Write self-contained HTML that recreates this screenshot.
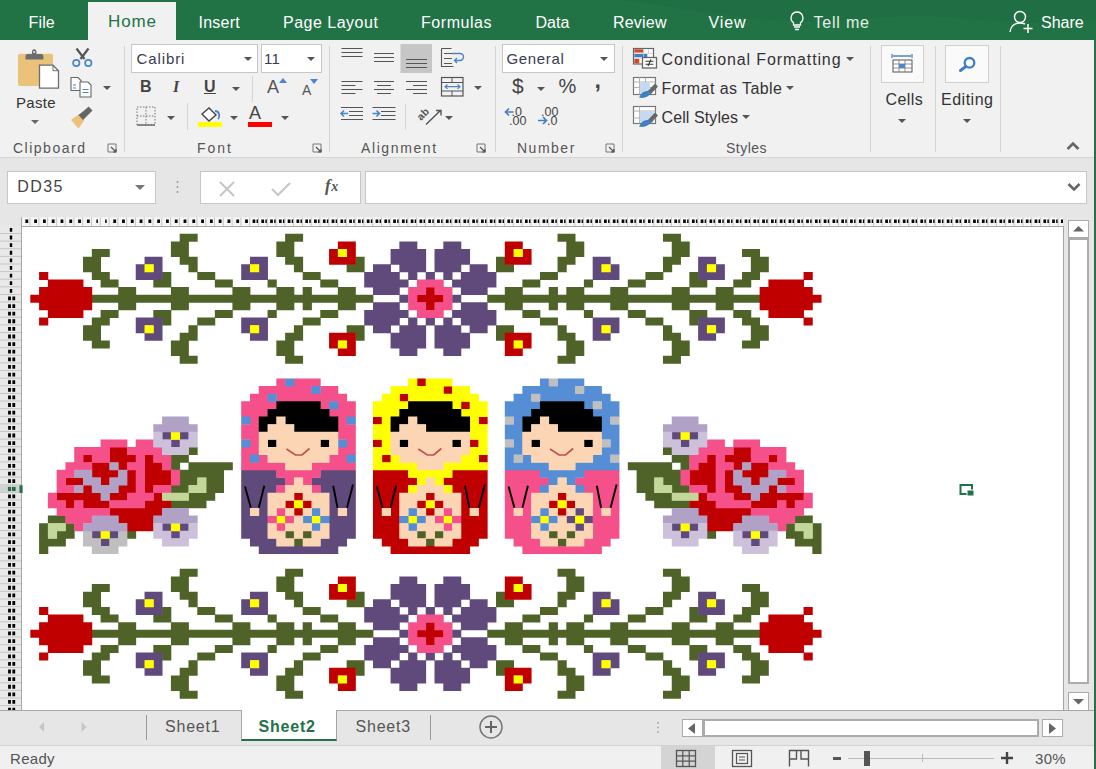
<!DOCTYPE html>
<html><head><meta charset="utf-8">
<style>
*{margin:0;padding:0;box-sizing:border-box}
html,body{width:1096px;height:769px;overflow:hidden;background:#e6e6e6;font-family:"Liberation Sans",sans-serif;color:#444}
.a{position:absolute}
#tabs{left:0;top:0;width:1096px;height:40px;background:#217346}
.tab{position:absolute;top:13.5px;font-size:16px;letter-spacing:.45px;color:#fff;line-height:18px;white-space:nowrap}
#home{left:88px;top:2px;width:88px;height:39px;background:#f1f1f1}
#ribbon{left:0;top:40px;width:1094px;height:118px;background:#f1f1f1;border-bottom:1px solid #d5d5d5}
.vsep{position:absolute;width:1px;background:#d4d4d4}
.glabel{position:absolute;top:139.5px;font-size:14px;letter-spacing:.4px;color:#555;line-height:16px;white-space:nowrap}
.rt{position:absolute;font-size:16px;letter-spacing:.3px;color:#333;line-height:18px;white-space:nowrap}
.box{position:absolute;background:#fff;border:1px solid #c6c6c6}
.dd{position:absolute;width:0;height:0;border-left:4px solid transparent;border-right:4px solid transparent;border-top:4px solid #555}
.ch{position:absolute;top:217.5px;width:8.787px;height:9px;border-right:1px solid #c9c9c9;background:#f7f7f7;font-size:6px;font-weight:bold;color:#000;text-align:center;line-height:9px;overflow:hidden;letter-spacing:-.5px}
.rh{position:absolute;left:0;width:21.7px;height:7.614px;border-bottom:1px solid #c9c9c9;background:#f0f0f0;font-size:6px;font-weight:bold;color:#000;text-align:center;line-height:7px;overflow:hidden}
</style></head><body>
<!-- tab bar -->
<div id="tabs" class="a">
  <svg class="a" style="left:0;top:0" width="1096" height="40"><path d="M620 0 C700 8 760 30 880 18 C950 10 1000 30 1096 20 L1096 0 Z" fill="#1f6c42" opacity=".6"/></svg>
</div>
<div id="home" class="a"></div>
<div class="tab" style="left:28.5px;letter-spacing:.15px">File</div>
<div class="tab" style="left:108px;top:12.5px;font-size:17px;color:#217346;letter-spacing:.85px">Home</div>
<div class="tab" style="left:198.5px;letter-spacing:.25px">Insert</div>
<div class="tab" style="left:283px;letter-spacing:.5px">Page Layout</div>
<div class="tab" style="left:421px;letter-spacing:.55px">Formulas</div>
<div class="tab" style="left:535.5px;letter-spacing:0">Data</div>
<div class="tab" style="left:613px;letter-spacing:.2px">Review</div>
<div class="tab" style="left:708.5px;letter-spacing:.85px">View</div>
<svg class="a" style="left:788px;top:10px" width="18" height="22"><path d="M9 2 a6 6 0 0 0 -3.5 10.8 V15 h7 v-2.2 A6 6 0 0 0 9 2z M6 17 h6 M7 19.5 h4" fill="none" stroke="#fff" stroke-width="1.3"/></svg>
<div class="tab" style="left:813.5px;letter-spacing:.8px;color:#e6eee9">Tell me</div>
<svg class="a" style="left:1008px;top:8px" width="26" height="26"><circle cx="12" cy="9" r="5.5" fill="none" stroke="#fff" stroke-width="1.4"/><path d="M2 24 C3 17 8 15 12 15 C14 15 16 15.5 17 16" fill="none" stroke="#fff" stroke-width="1.4"/><path d="M20 16 v9 M15.5 20.5 h9" stroke="#fff" stroke-width="1.5"/></svg>
<div class="tab" style="left:1041px;letter-spacing:0">Share</div>

<!-- ribbon -->
<div id="ribbon" class="a"></div>
<div class="a" style="left:1094px;top:40px;width:2px;height:729px;background:#217346"></div>

<!-- clipboard group -->
<svg class="a" style="left:0;top:40px" width="125" height="100">
  <rect x="18" y="13.7" width="35" height="32.3" rx="2" fill="#eac27a"/>
  <path d="M25.5 19.5 v-3.5 q0-2 2-2 h4.5 v-2.5 a2.2 2.2 0 0 1 4.4 0 v2.5 h5 q2 0 2 2 v3.5z" fill="#6d6d6d"/>
  <circle cx="34.2" cy="12" r="1" fill="#eee"/>
  <path d="M39.5 25.2 h13.5 l5.5 5.5 v17.4 h-19z" fill="#fff" stroke="#6d6d6d" stroke-width="1.3"/>
  <path d="M53 25.2 v5.5 h5.5" fill="none" stroke="#6d6d6d" stroke-width="1"/>
  <path d="M76.5 8.5 L84.5 19 M88.5 8.5 L80.5 19" stroke="#555" stroke-width="2.2"/>
  <circle cx="76.3" cy="23" r="3.2" fill="none" stroke="#4a86c8" stroke-width="1.7"/>
  <circle cx="88.3" cy="23" r="3.2" fill="none" stroke="#4a86c8" stroke-width="1.7"/>
  <path d="M71 37.5 h7 l3 3 v10 h-10z" fill="#fff" stroke="#666" stroke-width="1.1"/>
  <path d="M73 45 h3 M73 48 h3" stroke="#4a86c8" stroke-width="1"/>
  <path d="M80 42 h8 l3 3 v12 h-11z" fill="#fff" stroke="#666" stroke-width="1.1"/>
  <path d="M82.5 49.5 h6 M82.5 52.5 h6" stroke="#4a86c8" stroke-width="1"/>
  <path d="M71 80 L79 74 L84.5 80 L78.5 88.5 Z" fill="#eac27a"/>
  <path d="M78.5 75 L86 69 L90 73 L83 80 Z" fill="#666"/>
  <path d="M85.5 69.5 L88.5 66.5 L92.5 70.5 L89.5 73.5 Z" fill="#666"/>
</svg>
<div class="rt" style="left:16px;top:94px;font-size:15px">Paste</div>
<div class="dd" style="left:31px;top:120px;border-top-color:#666"></div>


<div class="dd" style="left:103px;top:86px"></div>

<div class="vsep" style="left:124px;top:46px;height:106px"></div>
<div class="glabel" style="left:13px;letter-spacing:1.5px">Clipboard</div>
<svg class="a" style="left:107px;top:143px" width="11" height="10"><path d="M1 1 h8 v8 h-8 z" fill="none" stroke="#777" stroke-width="1"/><path d="M4 4 L9 9 M9 6 v3 h-3" stroke="#555" stroke-width="1.2" fill="none"/></svg>

<!-- font group -->
<div class="box" style="left:131px;top:44px;width:127px;height:29px"></div>
<div class="rt" style="left:136.5px;top:50px;font-size:15px;color:#3a3a50;letter-spacing:.9px">Calibri</div>
<div class="dd" style="left:244px;top:57px"></div>
<div class="box" style="left:260.5px;top:44px;width:61.5px;height:29px"></div>
<div class="rt" style="left:264px;top:50px;font-size:15px;color:#3a3a50">11</div>
<div class="dd" style="left:307px;top:57px"></div>
<div class="rt" style="left:140px;top:78px;font-size:16px;font-weight:bold;color:#444">B</div>
<div class="rt" style="left:173px;top:78px;font-size:16px;font-style:italic;font-family:'Liberation Serif';font-weight:bold;color:#444">I</div>
<div class="rt" style="left:204px;top:78px;font-size:16px;font-weight:bold;color:#444;text-decoration:underline">U</div>
<div class="dd" style="left:232px;top:87px"></div>
<div class="vsep" style="left:252px;top:76px;height:26px"></div>
<div class="rt" style="left:267px;top:78px;font-size:18px;color:#555">A</div>
<svg class="a" style="left:279px;top:78px" width="8" height="5"><path d="M0 5 L4 0 L8 5Z" fill="#4a86c8"/></svg>
<div class="rt" style="left:302px;top:81px;font-size:14px;color:#555">A</div>
<svg class="a" style="left:310px;top:79px" width="8" height="5"><path d="M0 0 L4 5 L8 0Z" fill="#4a86c8"/></svg>
<svg class="a" style="left:136px;top:106px" width="22" height="20"><path d="M1 1 h18 v18 h-18z M10 1 v18 M1 10 h18" fill="none" stroke="#777" stroke-width="1" stroke-dasharray="1.5 1.5"/><path d="M1 19 h18" stroke="#555" stroke-width="1.2"/></svg>
<div class="dd" style="left:167px;top:116px"></div>
<div class="vsep" style="left:187px;top:103px;height:27px"></div>
<svg class="a" style="left:197px;top:105px" width="28" height="24"><path d="M5 9 L12 3 L19 10 L12 16 Z" fill="#fff" stroke="#444" stroke-width="1.4"/><path d="M18 6 C23 6 23 12 21 14" fill="none" stroke="#4a86c8" stroke-width="1.8"/><rect x="1" y="17" width="24" height="5" fill="#ffff00"/></svg>
<div class="dd" style="left:230px;top:116px"></div>
<div class="rt" style="left:249px;top:104px;font-size:18px;color:#444">A</div>
<div class="a" style="left:248px;top:122px;width:24px;height:5px;background:#ff0000"></div>
<div class="dd" style="left:281px;top:116px"></div>
<div class="vsep" style="left:329px;top:46px;height:106px"></div>
<div class="glabel" style="left:197px;letter-spacing:2px">Font</div>
<svg class="a" style="left:312px;top:143px" width="11" height="10"><path d="M1 1 h8 v8 h-8 z" fill="none" stroke="#777" stroke-width="1"/><path d="M4 4 L9 9 M9 6 v3 h-3" stroke="#555" stroke-width="1.2" fill="none"/></svg>

<!-- alignment group -->
<svg class="a" style="left:0;top:0" width="1096" height="160">
  <g stroke="#555" stroke-width="1.1" fill="none">
   <path d="M341.5 48.5h21M341.5 52.5h21M341.5 56.5h21"/>
   <path d="M374 53.5h20M374 57.5h20M374 61.5h20"/>
  </g>
  <rect x="400.5" y="44" width="31.5" height="29" fill="#c6c6c6"/>
  <path d="M406 59.5h21M406 63.5h21M406 67.5h21" stroke="#555" stroke-width="1.1"/>
  <g fill="none" stroke="#555" stroke-width="1.1">
   <path d="M441.5 48.5v18h12M441.5 48.5h10M444 53.5h17M444 58.5h8M444 63.5h8"/>
  </g>
  <path d="M452 53.5h8a3.5 3.5 0 0 1 0 7h-5M457 58l-2.5 2.5l2.5 2.5" fill="none" stroke="#4a86c8" stroke-width="1.4"/>
  <g stroke="#555" stroke-width="1.1">
   <path d="M341.5 81.5h21M341.5 85.5h14M341.5 89.5h21M341.5 93.5h14"/>
   <path d="M374 81.5h20M377 85.5h14M374 89.5h20M377 93.5h14"/>
   <path d="M406 81.5h21M413 85.5h14M406 89.5h21M413 93.5h14"/>
  </g>
  <rect x="441.5" y="77.5" width="21.5" height="18.5" fill="none" stroke="#555" stroke-width="1.2"/>
  <path d="M441.5 82.5h21.5M441.5 91h21.5M452 77.5v5M452 91v5" stroke="#555" stroke-width="1"/>
  <path d="M445 86.7h15M447.5 84.5l-2.5 2.2l2.5 2.2M457.5 84.5l2.5 2.2l-2.5 2.2" fill="none" stroke="#4a86c8" stroke-width="1.2"/>
  <g stroke="#555" stroke-width="1.1">
   <path d="M341 107.5h22M349 111.5h14M349 115.5h14M341 119.5h22"/>
   <path d="M372.5 107.5h23M381 111.5h14.5M381 115.5h14.5M372.5 119.5h23"/>
  </g>
  <path d="M341 113.5h7M344 110.5l-3 3l3 3" fill="none" stroke="#4a86c8" stroke-width="1.6"/>
  <path d="M372.5 113.5h7M376.5 110.5l3 3l-3 3" fill="none" stroke="#4a86c8" stroke-width="1.6"/>
  <path d="M426 124.5L441 110M436 110.5h5v5" fill="none" stroke="#555" stroke-width="1.4"/>
  <text x="0" y="0" font-size="10.5" font-weight="bold" fill="#555" font-family="Liberation Sans" transform="translate(421 121) rotate(-45)">ab</text>
</svg>
<div class="dd" style="left:474px;top:86px"></div>
<div class="dd" style="left:445px;top:116px"></div>
<div class="vsep" style="left:405px;top:104px;height:26px"></div>
<div class="vsep" style="left:495px;top:46px;height:106px"></div>
<div class="glabel" style="left:361px;letter-spacing:1.6px">Alignment</div>
<svg class="a" style="left:476px;top:143px" width="11" height="10"><path d="M1 1 h8 v8 h-8 z" fill="none" stroke="#777" stroke-width="1"/><path d="M4 4 L9 9 M9 6 v3 h-3" stroke="#555" stroke-width="1.2" fill="none"/></svg>

<!-- number group -->
<div class="box" style="left:502px;top:44px;width:113px;height:29px"></div>
<div class="rt" style="left:506.5px;top:50px;font-size:15px;color:#3a3a50;letter-spacing:.65px">General</div>
<div class="dd" style="left:600px;top:57px"></div>
<div class="rt" style="left:512px;top:76.5px;font-size:21px;color:#444">$</div>
<div class="dd" style="left:537px;top:87px"></div>
<div class="rt" style="left:558.5px;top:77px;font-size:20px;color:#444">%</div>
<div class="rt" style="left:594.5px;top:71px;font-size:23px;font-weight:bold;color:#444">,</div>
<svg class="a" style="left:504px;top:105px" width="70" height="24">
 <text x="7.5" y="11" font-size="12.5" fill="#444" font-family="Liberation Sans">.0</text>
 <text x="5" y="20" font-size="12.5" fill="#444" font-family="Liberation Sans">.00</text>
 <path d="M1.5 7 h8 M5 3.5 l-3.5 3.5 l3.5 3.5" fill="none" stroke="#3f7fc4" stroke-width="1.7"/>
 <text x="37" y="11" font-size="12.5" fill="#444" font-family="Liberation Sans">.00</text>
 <text x="43" y="20" font-size="12.5" fill="#444" font-family="Liberation Sans">.0</text>
 <path d="M34 15.5 h8.5 M39 12 l3.5 3.5 l-3.5 3.5" fill="none" stroke="#3f7fc4" stroke-width="1.7"/>
</svg>
<div class="vsep" style="left:622px;top:46px;height:106px"></div>
<div class="glabel" style="left:517px;letter-spacing:1.5px">Number</div>
<svg class="a" style="left:605px;top:143px" width="11" height="10"><path d="M1 1 h8 v8 h-8 z" fill="none" stroke="#777" stroke-width="1"/><path d="M4 4 L9 9 M9 6 v3 h-3" stroke="#555" stroke-width="1.2" fill="none"/></svg>

<!-- styles group -->
<svg class="a" style="left:625px;top:42px" width="40" height="90">
  <rect x="8.5" y="6.5" width="20" height="15.5" fill="#fff" stroke="#666" stroke-width="1.2"/>
  <path d="M9 10h15" stroke="#e9e9e9" stroke-width="0"/>
  <rect x="9.3" y="7.3" width="9" height="3.3" fill="#d24726"/>
  <rect x="9.3" y="12" width="13" height="3.3" fill="#3f7fc4"/>
  <rect x="9.3" y="16.8" width="5" height="4.5" fill="#d24726"/>
  <path d="M18.5 7v14.5M23.5 7v5M9 11.3h19M9 16h19" stroke="#ccc" stroke-width=".8"/>
  <rect x="17.5" y="15.5" width="14" height="10.5" fill="#fff" stroke="#666" stroke-width="1.3"/>
  <path d="M20.5 19.3h8M20.5 22.3h8M26 17.5l-3 6.5" stroke="#333" stroke-width="1.1"/>
  <rect x="8.5" y="35.5" width="22" height="17" fill="#fff" stroke="#777" stroke-width="1.2"/>
  <path d="M8.5 40h22M8.5 45.5h22M14.5 35.5v17M20.5 35.5v17" stroke="#aaa" stroke-width=".9"/>
  <rect x="14.8" y="40.3" width="10" height="11.5" fill="#c5d9f1"/>
  <path d="M22 50 L30 41.5 L33 44.5 L25 53 Z" fill="#666"/>
  <path d="M14 55.5 C17 49 22 47.5 26 50.5 C25 54 19 57 14 55.5Z" fill="#3f7fc4"/>
  <rect x="8.5" y="64.5" width="22" height="17" fill="#fff" stroke="#777" stroke-width="1.2"/>
  <path d="M8.5 69h22M8.5 76h22M14.5 64.5v17" stroke="#aaa" stroke-width=".9"/>
  <rect x="14.8" y="69.3" width="14" height="11.5" fill="#c5d9f1"/>
  <path d="M22 79 L30 70.5 L33 73.5 L25 82 Z" fill="#666"/>
  <path d="M14 84.5 C17 78 22 76.5 26 79.5 C25 83 19 86 14 84.5Z" fill="#3f7fc4"/>
</svg>
<div class="rt" style="left:661.5px;top:51px;letter-spacing:.86px">Conditional Formatting</div>
<div class="dd" style="left:846px;top:57px"></div>
<div class="rt" style="left:661.5px;top:80px;letter-spacing:.43px">Format as Table</div>
<div class="dd" style="left:786px;top:86px"></div>
<div class="rt" style="left:661.5px;top:109px;letter-spacing:.1px">Cell Styles</div>
<div class="dd" style="left:742px;top:115px"></div>
<div class="vsep" style="left:870px;top:46px;height:106px"></div>
<div class="glabel" style="left:726px;letter-spacing:.5px">Styles</div>

<!-- cells / editing -->
<div class="box" style="left:880.5px;top:45px;width:43.5px;height:38px;background:#fafafa;border-color:#d0d0d0"></div>
<svg class="a" style="left:890px;top:52px" width="24" height="24"><path d="M2 2 v4 M22 2 v4 M3 4 h18" stroke="#4a86c8" stroke-width="1.3"/><rect x="3" y="8" width="19" height="12" fill="#fff" stroke="#555" stroke-width="1"/><path d="M3 12 h19 M3 16 h19 M9 8 v12 M15 8 v12" stroke="#777" stroke-width=".8"/><rect x="9" y="12" width="6" height="4" fill="#4a86c8"/></svg>
<div class="rt" style="left:885.5px;top:91px;font-size:16px;letter-spacing:.4px">Cells</div>
<div class="dd" style="left:898px;top:119px"></div>
<div class="vsep" style="left:934.8px;top:46px;height:106px"></div>
<div class="box" style="left:945px;top:45px;width:44px;height:38px;background:#fafafa;border-color:#d0d0d0"></div>
<svg class="a" style="left:956px;top:55px" width="22" height="20"><circle cx="13.5" cy="7.8" r="4.8" fill="none" stroke="#3f7fc4" stroke-width="2.3"/><path d="M9.8 11.5 L4.5 15.5" stroke="#3f7fc4" stroke-width="3" stroke-linecap="round"/></svg>
<div class="rt" style="left:941px;top:91px;font-size:16px;letter-spacing:.5px">Editing</div>
<div class="dd" style="left:963px;top:119px"></div>
<div class="vsep" style="left:1000px;top:46px;height:106px"></div>
<svg class="a" style="left:1066px;top:141px" width="14" height="10"><path d="M1.5 8 L7 2.5 L12.5 8" fill="none" stroke="#666" stroke-width="2.6"/></svg>

<!-- formula bar -->
<div class="box" style="left:7px;top:171px;width:149px;height:33px"></div>
<div class="rt" style="left:17.3px;top:178px;font-size:16px;color:#444;letter-spacing:1.4px">DD35</div>
<div class="dd" style="left:135px;top:185px;border-left-width:5px;border-right-width:5px;border-top-width:5px;border-top-color:#777"></div>
<svg class="a" style="left:175px;top:180px" width="5" height="16"><circle cx="2.5" cy="2" r="1" fill="#999"/><circle cx="2.5" cy="7" r="1" fill="#999"/><circle cx="2.5" cy="12" r="1" fill="#999"/></svg>
<div class="box" style="left:200px;top:171px;width:161px;height:33px"></div>
<svg class="a" style="left:218px;top:181px" width="20" height="16"><path d="M2 1 L16 15 M16 1 L2 15" stroke="#c4c4c4" stroke-width="1.8"/></svg>
<svg class="a" style="left:270px;top:181px" width="22" height="16"><path d="M2 8 L8 14 L20 2" fill="none" stroke="#c8c8c8" stroke-width="2.2"/></svg>
<div class="rt" style="left:325px;top:177px;font-size:17px;font-style:italic;font-weight:bold;font-family:'Liberation Serif';color:#555;letter-spacing:.5px">f<span style="font-size:14px;letter-spacing:0">x</span></div>
<div class="box" style="left:365px;top:171px;width:722px;height:33px"></div>
<svg class="a" style="left:1067px;top:182px" width="14" height="10"><path d="M1.5 2 L7 7.5 L12.5 2" fill="none" stroke="#666" stroke-width="2.6"/></svg>

<!-- grid -->
<svg class="a" style="left:0;top:0" width="1096" height="769"><defs><clipPath id="hc"><rect x="0" y="0" width="1063" height="769"/></clipPath></defs><g clip-path="url(#hc)"><rect x="21.7" y="217.3" width="1041.3" height="9.1" fill="#f6f6f6"/><path d="M21.5 217.3v9.5" stroke="#a6a6a6" stroke-width="1"/><rect x="0" y="226.4" width="21.7" height="484" fill="#e9e9e9"/><rect x="0" y="485.3" width="21.7" height="7.6" fill="#d2d2d2"/><path d="M30.01 217.5v9M38.79 217.5v9M47.58 217.5v9M56.37 217.5v9M65.16 217.5v9M73.94 217.5v9M82.73 217.5v9M91.52 217.5v9M100.30 217.5v9M109.09 217.5v9M117.88 217.5v9M126.66 217.5v9M135.45 217.5v9M144.24 217.5v9M153.03 217.5v9M161.81 217.5v9M170.60 217.5v9M179.39 217.5v9M188.17 217.5v9M196.96 217.5v9M205.75 217.5v9M214.53 217.5v9M223.32 217.5v9M232.11 217.5v9M240.90 217.5v9M249.68 217.5v9M258.47 217.5v9M267.26 217.5v9M276.04 217.5v9M284.83 217.5v9M293.62 217.5v9M302.40 217.5v9M311.19 217.5v9M319.98 217.5v9M328.77 217.5v9M337.55 217.5v9M346.34 217.5v9M355.13 217.5v9M363.91 217.5v9M372.70 217.5v9M381.49 217.5v9M390.27 217.5v9M399.06 217.5v9M407.85 217.5v9M416.64 217.5v9M425.42 217.5v9M434.21 217.5v9M443.00 217.5v9M451.78 217.5v9M460.57 217.5v9M469.36 217.5v9M478.14 217.5v9M486.93 217.5v9M495.72 217.5v9M504.51 217.5v9M513.29 217.5v9M522.08 217.5v9M530.87 217.5v9M539.65 217.5v9M548.44 217.5v9M557.23 217.5v9M566.01 217.5v9M574.80 217.5v9M583.59 217.5v9M592.38 217.5v9M601.16 217.5v9M609.95 217.5v9M618.74 217.5v9M627.52 217.5v9M636.31 217.5v9M645.10 217.5v9M653.88 217.5v9M662.67 217.5v9M671.46 217.5v9M680.25 217.5v9M689.03 217.5v9M697.82 217.5v9M706.61 217.5v9M715.39 217.5v9M724.18 217.5v9M732.97 217.5v9M741.75 217.5v9M750.54 217.5v9M759.33 217.5v9M768.12 217.5v9M776.90 217.5v9M785.69 217.5v9M794.48 217.5v9M803.26 217.5v9M812.05 217.5v9M820.84 217.5v9M829.62 217.5v9M838.41 217.5v9M847.20 217.5v9M855.99 217.5v9M864.77 217.5v9M873.56 217.5v9M882.35 217.5v9M891.13 217.5v9M899.92 217.5v9M908.71 217.5v9M917.49 217.5v9M926.28 217.5v9M935.07 217.5v9M943.86 217.5v9M952.64 217.5v9M961.43 217.5v9M970.22 217.5v9M979.00 217.5v9M987.79 217.5v9M996.58 217.5v9M1005.36 217.5v9M1014.15 217.5v9M1022.94 217.5v9M1031.73 217.5v9M1040.51 217.5v9M1049.30 217.5v9M1058.09 217.5v9M1066.87 217.5v9M0 233.51h21.7M0 241.13h21.7M0 248.74h21.7M0 256.36h21.7M0 263.97h21.7M0 271.58h21.7M0 279.20h21.7M0 286.81h21.7M0 294.43h21.7M0 302.04h21.7M0 309.65h21.7M0 317.27h21.7M0 324.88h21.7M0 332.50h21.7M0 340.11h21.7M0 347.72h21.7M0 355.34h21.7M0 362.95h21.7M0 370.57h21.7M0 378.18h21.7M0 385.79h21.7M0 393.41h21.7M0 401.02h21.7M0 408.64h21.7M0 416.25h21.7M0 423.86h21.7M0 431.48h21.7M0 439.09h21.7M0 446.71h21.7M0 454.32h21.7M0 461.93h21.7M0 469.55h21.7M0 477.16h21.7M0 484.78h21.7M0 492.39h21.7M0 500.00h21.7M0 507.62h21.7M0 515.23h21.7M0 522.85h21.7M0 530.46h21.7M0 538.07h21.7M0 545.69h21.7M0 553.30h21.7M0 560.92h21.7M0 568.53h21.7M0 576.14h21.7M0 583.76h21.7M0 591.37h21.7M0 598.99h21.7M0 606.60h21.7M0 614.21h21.7M0 621.83h21.7M0 629.44h21.7M0 637.06h21.7M0 644.67h21.7M0 652.28h21.7M0 659.90h21.7M0 667.51h21.7M0 675.13h21.7M0 682.74h21.7M0 690.35h21.7M0 697.97h21.7M0 705.58h21.7M0 713.20h21.7" stroke="#c6c6c6" stroke-width="1" fill="none"/><path d="M25.41 219.4h2.8v3.6h-2.8zM34.20 219.4h2.8v3.6h-2.8zM42.99 219.4h2.8v3.6h-2.8zM51.77 219.4h2.8v3.6h-2.8zM60.56 219.4h2.8v3.6h-2.8zM69.35 219.4h2.8v3.6h-2.8zM78.14 219.4h2.8v3.6h-2.8zM86.92 219.4h2.8v3.6h-2.8zM96.36 219.4h1.5v3.6h-1.5zM105.15 219.4h1.5v3.6h-1.5zM113.28 219.4h2.8v3.6h-2.8zM122.07 219.4h2.8v3.6h-2.8zM130.86 219.4h2.8v3.6h-2.8zM139.64 219.4h2.8v3.6h-2.8zM148.43 219.4h2.8v3.6h-2.8zM157.22 219.4h2.8v3.6h-2.8zM166.01 219.4h2.8v3.6h-2.8zM174.79 219.4h2.8v3.6h-2.8zM183.58 219.4h2.8v3.6h-2.8zM192.37 219.4h2.8v3.6h-2.8zM201.15 219.4h2.8v3.6h-2.8zM209.94 219.4h2.8v3.6h-2.8zM218.73 219.4h2.8v3.6h-2.8zM227.51 219.4h2.8v3.6h-2.8zM236.30 219.4h2.8v3.6h-2.8zM245.09 219.4h2.8v3.6h-2.8zM252.58 219.4h2.7v3.6h-2.7zM256.58 219.4h1.4v3.6h-1.4zM261.36 219.4h2.7v3.6h-2.7zM265.36 219.4h1.4v3.6h-1.4zM270.15 219.4h2.7v3.6h-2.7zM274.15 219.4h1.4v3.6h-1.4zM278.94 219.4h2.7v3.6h-2.7zM282.94 219.4h1.4v3.6h-1.4zM287.72 219.4h2.7v3.6h-2.7zM291.72 219.4h1.4v3.6h-1.4zM296.51 219.4h2.7v3.6h-2.7zM300.51 219.4h1.4v3.6h-1.4zM305.30 219.4h2.7v3.6h-2.7zM309.30 219.4h1.4v3.6h-1.4zM314.08 219.4h2.7v3.6h-2.7zM318.08 219.4h1.4v3.6h-1.4zM322.87 219.4h2.7v3.6h-2.7zM326.87 219.4h1.4v3.6h-1.4zM331.66 219.4h2.7v3.6h-2.7zM335.66 219.4h1.4v3.6h-1.4zM340.45 219.4h2.7v3.6h-2.7zM344.45 219.4h1.4v3.6h-1.4zM349.23 219.4h2.7v3.6h-2.7zM353.23 219.4h1.4v3.6h-1.4zM358.02 219.4h2.7v3.6h-2.7zM362.02 219.4h1.4v3.6h-1.4zM366.81 219.4h2.7v3.6h-2.7zM370.81 219.4h1.4v3.6h-1.4zM375.59 219.4h2.7v3.6h-2.7zM379.59 219.4h1.4v3.6h-1.4zM384.38 219.4h2.7v3.6h-2.7zM388.38 219.4h1.4v3.6h-1.4zM393.17 219.4h2.7v3.6h-2.7zM397.17 219.4h1.4v3.6h-1.4zM401.95 219.4h2.7v3.6h-2.7zM405.95 219.4h1.4v3.6h-1.4zM410.74 219.4h2.7v3.6h-2.7zM414.74 219.4h1.4v3.6h-1.4zM419.53 219.4h2.7v3.6h-2.7zM423.53 219.4h1.4v3.6h-1.4zM428.32 219.4h2.7v3.6h-2.7zM432.32 219.4h1.4v3.6h-1.4zM437.10 219.4h2.7v3.6h-2.7zM441.10 219.4h1.4v3.6h-1.4zM445.89 219.4h2.7v3.6h-2.7zM449.89 219.4h1.4v3.6h-1.4zM454.68 219.4h2.7v3.6h-2.7zM458.68 219.4h1.4v3.6h-1.4zM463.46 219.4h2.7v3.6h-2.7zM467.46 219.4h1.4v3.6h-1.4zM472.25 219.4h2.7v3.6h-2.7zM476.25 219.4h1.4v3.6h-1.4zM481.04 219.4h2.7v3.6h-2.7zM485.04 219.4h1.4v3.6h-1.4zM489.82 219.4h2.7v3.6h-2.7zM493.82 219.4h1.4v3.6h-1.4zM498.61 219.4h2.7v3.6h-2.7zM502.61 219.4h1.4v3.6h-1.4zM507.40 219.4h2.7v3.6h-2.7zM511.40 219.4h1.4v3.6h-1.4zM516.19 219.4h2.7v3.6h-2.7zM520.19 219.4h1.4v3.6h-1.4zM524.97 219.4h2.7v3.6h-2.7zM528.97 219.4h1.4v3.6h-1.4zM533.76 219.4h2.7v3.6h-2.7zM537.76 219.4h1.4v3.6h-1.4zM542.55 219.4h2.7v3.6h-2.7zM546.55 219.4h1.4v3.6h-1.4zM551.33 219.4h2.7v3.6h-2.7zM555.33 219.4h1.4v3.6h-1.4zM560.12 219.4h2.7v3.6h-2.7zM564.12 219.4h1.4v3.6h-1.4zM568.91 219.4h2.7v3.6h-2.7zM572.91 219.4h1.4v3.6h-1.4zM577.69 219.4h2.7v3.6h-2.7zM581.69 219.4h1.4v3.6h-1.4zM586.48 219.4h2.7v3.6h-2.7zM590.48 219.4h1.4v3.6h-1.4zM595.27 219.4h2.7v3.6h-2.7zM599.27 219.4h1.4v3.6h-1.4zM604.06 219.4h2.7v3.6h-2.7zM608.06 219.4h1.4v3.6h-1.4zM612.84 219.4h2.7v3.6h-2.7zM616.84 219.4h1.4v3.6h-1.4zM621.63 219.4h2.7v3.6h-2.7zM625.63 219.4h1.4v3.6h-1.4zM630.42 219.4h2.7v3.6h-2.7zM634.42 219.4h1.4v3.6h-1.4zM639.20 219.4h2.7v3.6h-2.7zM643.20 219.4h1.4v3.6h-1.4zM647.99 219.4h2.7v3.6h-2.7zM651.99 219.4h1.4v3.6h-1.4zM656.78 219.4h2.7v3.6h-2.7zM660.78 219.4h1.4v3.6h-1.4zM665.56 219.4h2.7v3.6h-2.7zM669.56 219.4h1.4v3.6h-1.4zM674.35 219.4h2.7v3.6h-2.7zM678.35 219.4h1.4v3.6h-1.4zM683.14 219.4h2.7v3.6h-2.7zM687.14 219.4h1.4v3.6h-1.4zM691.93 219.4h2.7v3.6h-2.7zM695.93 219.4h1.4v3.6h-1.4zM700.71 219.4h2.7v3.6h-2.7zM704.71 219.4h1.4v3.6h-1.4zM709.50 219.4h2.7v3.6h-2.7zM713.50 219.4h1.4v3.6h-1.4zM718.29 219.4h2.7v3.6h-2.7zM722.29 219.4h1.4v3.6h-1.4zM727.07 219.4h2.7v3.6h-2.7zM731.07 219.4h1.4v3.6h-1.4zM735.86 219.4h2.7v3.6h-2.7zM739.86 219.4h1.4v3.6h-1.4zM744.65 219.4h2.7v3.6h-2.7zM748.65 219.4h1.4v3.6h-1.4zM753.43 219.4h2.7v3.6h-2.7zM757.43 219.4h1.4v3.6h-1.4zM762.22 219.4h2.7v3.6h-2.7zM766.22 219.4h1.4v3.6h-1.4zM771.01 219.4h2.7v3.6h-2.7zM775.01 219.4h1.4v3.6h-1.4zM779.80 219.4h2.7v3.6h-2.7zM783.80 219.4h1.4v3.6h-1.4zM788.58 219.4h2.7v3.6h-2.7zM792.58 219.4h1.4v3.6h-1.4zM797.37 219.4h2.7v3.6h-2.7zM801.37 219.4h1.4v3.6h-1.4zM806.16 219.4h2.7v3.6h-2.7zM810.16 219.4h1.4v3.6h-1.4zM814.94 219.4h2.7v3.6h-2.7zM818.94 219.4h1.4v3.6h-1.4zM823.73 219.4h2.7v3.6h-2.7zM827.73 219.4h1.4v3.6h-1.4zM832.52 219.4h2.7v3.6h-2.7zM836.52 219.4h1.4v3.6h-1.4zM841.30 219.4h2.7v3.6h-2.7zM845.30 219.4h1.4v3.6h-1.4zM850.09 219.4h2.7v3.6h-2.7zM854.09 219.4h1.4v3.6h-1.4zM858.88 219.4h2.7v3.6h-2.7zM862.88 219.4h1.4v3.6h-1.4zM867.67 219.4h2.7v3.6h-2.7zM871.67 219.4h1.4v3.6h-1.4zM876.45 219.4h2.7v3.6h-2.7zM880.45 219.4h1.4v3.6h-1.4zM885.24 219.4h2.7v3.6h-2.7zM889.24 219.4h1.4v3.6h-1.4zM894.03 219.4h2.7v3.6h-2.7zM898.03 219.4h1.4v3.6h-1.4zM902.81 219.4h2.7v3.6h-2.7zM906.81 219.4h1.4v3.6h-1.4zM911.60 219.4h2.7v3.6h-2.7zM915.60 219.4h1.4v3.6h-1.4zM920.39 219.4h2.7v3.6h-2.7zM924.39 219.4h1.4v3.6h-1.4zM929.17 219.4h2.7v3.6h-2.7zM933.17 219.4h1.4v3.6h-1.4zM937.96 219.4h2.7v3.6h-2.7zM941.96 219.4h1.4v3.6h-1.4zM946.75 219.4h2.7v3.6h-2.7zM950.75 219.4h1.4v3.6h-1.4zM955.54 219.4h2.7v3.6h-2.7zM959.54 219.4h1.4v3.6h-1.4zM964.32 219.4h2.7v3.6h-2.7zM968.32 219.4h1.4v3.6h-1.4zM973.11 219.4h2.7v3.6h-2.7zM977.11 219.4h1.4v3.6h-1.4zM981.90 219.4h2.7v3.6h-2.7zM985.90 219.4h1.4v3.6h-1.4zM990.68 219.4h2.7v3.6h-2.7zM994.68 219.4h1.4v3.6h-1.4zM999.47 219.4h2.7v3.6h-2.7zM1003.47 219.4h1.4v3.6h-1.4zM1008.26 219.4h2.7v3.6h-2.7zM1012.26 219.4h1.4v3.6h-1.4zM1017.04 219.4h2.7v3.6h-2.7zM1021.04 219.4h1.4v3.6h-1.4zM1025.83 219.4h2.7v3.6h-2.7zM1029.83 219.4h1.4v3.6h-1.4zM1034.62 219.4h2.7v3.6h-2.7zM1038.62 219.4h1.4v3.6h-1.4zM1043.41 219.4h2.7v3.6h-2.7zM1047.41 219.4h1.4v3.6h-1.4zM1052.19 219.4h2.7v3.6h-2.7zM1056.19 219.4h1.4v3.6h-1.4zM1060.98 219.4h2.7v3.6h-2.7zM1064.98 219.4h1.4v3.6h-1.4zM9.8 228.00h2.4v3.8h-2.4zM9.8 235.61h2.4v3.8h-2.4zM9.8 243.23h2.4v3.8h-2.4zM9.8 250.84h2.4v3.8h-2.4zM9.8 258.46h2.4v3.8h-2.4zM9.8 266.07h2.4v3.8h-2.4zM9.8 273.68h2.4v3.8h-2.4zM9.8 281.30h2.4v3.8h-2.4zM9.8 288.91h2.4v3.8h-2.4zM8.1 296.53h2.8v3.8h-2.8zM12.4 296.53h2.8v3.8h-2.8zM8.1 304.14h2.8v3.8h-2.8zM12.4 304.14h2.8v3.8h-2.8zM8.1 311.75h2.8v3.8h-2.8zM12.4 311.75h2.8v3.8h-2.8zM8.1 319.37h2.8v3.8h-2.8zM12.4 319.37h2.8v3.8h-2.8zM8.1 326.98h2.8v3.8h-2.8zM12.4 326.98h2.8v3.8h-2.8zM8.1 334.60h2.8v3.8h-2.8zM12.4 334.60h2.8v3.8h-2.8zM8.1 342.21h2.8v3.8h-2.8zM12.4 342.21h2.8v3.8h-2.8zM8.1 349.82h2.8v3.8h-2.8zM12.4 349.82h2.8v3.8h-2.8zM8.1 357.44h2.8v3.8h-2.8zM12.4 357.44h2.8v3.8h-2.8zM8.1 365.05h2.8v3.8h-2.8zM12.4 365.05h2.8v3.8h-2.8zM8.1 372.67h2.8v3.8h-2.8zM12.4 372.67h2.8v3.8h-2.8zM8.1 380.28h2.8v3.8h-2.8zM12.4 380.28h2.8v3.8h-2.8zM8.1 387.89h2.8v3.8h-2.8zM12.4 387.89h2.8v3.8h-2.8zM8.1 395.51h2.8v3.8h-2.8zM12.4 395.51h2.8v3.8h-2.8zM8.1 403.12h2.8v3.8h-2.8zM12.4 403.12h2.8v3.8h-2.8zM8.1 410.74h2.8v3.8h-2.8zM12.4 410.74h2.8v3.8h-2.8zM8.1 418.35h2.8v3.8h-2.8zM12.4 418.35h2.8v3.8h-2.8zM8.1 425.96h2.8v3.8h-2.8zM12.4 425.96h2.8v3.8h-2.8zM8.1 433.58h2.8v3.8h-2.8zM12.4 433.58h2.8v3.8h-2.8zM8.1 441.19h2.8v3.8h-2.8zM12.4 441.19h2.8v3.8h-2.8zM8.1 448.81h2.8v3.8h-2.8zM12.4 448.81h2.8v3.8h-2.8zM8.1 456.42h2.8v3.8h-2.8zM12.4 456.42h2.8v3.8h-2.8zM8.1 464.03h2.8v3.8h-2.8zM12.4 464.03h2.8v3.8h-2.8zM8.1 471.65h2.8v3.8h-2.8zM12.4 471.65h2.8v3.8h-2.8zM8.1 479.26h2.8v3.8h-2.8zM12.4 479.26h2.8v3.8h-2.8zM8.1 486.88h2.8v3.8h-2.8zM12.4 486.88h2.8v3.8h-2.8zM8.1 494.49h2.8v3.8h-2.8zM12.4 494.49h2.8v3.8h-2.8zM8.1 502.10h2.8v3.8h-2.8zM12.4 502.10h2.8v3.8h-2.8zM8.1 509.72h2.8v3.8h-2.8zM12.4 509.72h2.8v3.8h-2.8zM8.1 517.33h2.8v3.8h-2.8zM12.4 517.33h2.8v3.8h-2.8zM8.1 524.95h2.8v3.8h-2.8zM12.4 524.95h2.8v3.8h-2.8zM8.1 532.56h2.8v3.8h-2.8zM12.4 532.56h2.8v3.8h-2.8zM8.1 540.17h2.8v3.8h-2.8zM12.4 540.17h2.8v3.8h-2.8zM8.1 547.79h2.8v3.8h-2.8zM12.4 547.79h2.8v3.8h-2.8zM8.1 555.40h2.8v3.8h-2.8zM12.4 555.40h2.8v3.8h-2.8zM8.1 563.02h2.8v3.8h-2.8zM12.4 563.02h2.8v3.8h-2.8zM8.1 570.63h2.8v3.8h-2.8zM12.4 570.63h2.8v3.8h-2.8zM8.1 578.24h2.8v3.8h-2.8zM12.4 578.24h2.8v3.8h-2.8zM8.1 585.86h2.8v3.8h-2.8zM12.4 585.86h2.8v3.8h-2.8zM8.1 593.47h2.8v3.8h-2.8zM12.4 593.47h2.8v3.8h-2.8zM8.1 601.09h2.8v3.8h-2.8zM12.4 601.09h2.8v3.8h-2.8zM8.1 608.70h2.8v3.8h-2.8zM12.4 608.70h2.8v3.8h-2.8zM8.1 616.31h2.8v3.8h-2.8zM12.4 616.31h2.8v3.8h-2.8zM8.1 623.93h2.8v3.8h-2.8zM12.4 623.93h2.8v3.8h-2.8zM8.1 631.54h2.8v3.8h-2.8zM12.4 631.54h2.8v3.8h-2.8zM8.1 639.16h2.8v3.8h-2.8zM12.4 639.16h2.8v3.8h-2.8zM8.1 646.77h2.8v3.8h-2.8zM12.4 646.77h2.8v3.8h-2.8zM8.1 654.38h2.8v3.8h-2.8zM12.4 654.38h2.8v3.8h-2.8zM8.1 662.00h2.8v3.8h-2.8zM12.4 662.00h2.8v3.8h-2.8zM8.1 669.61h2.8v3.8h-2.8zM12.4 669.61h2.8v3.8h-2.8zM8.1 677.23h2.8v3.8h-2.8zM12.4 677.23h2.8v3.8h-2.8zM8.1 684.84h2.8v3.8h-2.8zM12.4 684.84h2.8v3.8h-2.8zM8.1 692.45h2.8v3.8h-2.8zM12.4 692.45h2.8v3.8h-2.8zM8.1 700.07h2.8v3.8h-2.8zM12.4 700.07h2.8v3.8h-2.8zM8.1 707.68h2.8v3.8h-2.8zM12.4 707.68h2.8v3.8h-2.8z" fill="#000"/><rect x="7.9" y="486.9" width="3.2" height="4" fill="#217346"/><rect x="12.3" y="486.9" width="3.2" height="4" fill="#217346"/></g></svg>
<div class="a" style="left:21px;top:226px;width:1042.5px;height:484.5px;background:#fff;border-left:1px solid #a6a6a6;border-top:1px solid #a6a6a6;border-right:1px solid #a6a6a6;border-bottom:1px solid #a6a6a6"></div>
<svg class="a" style="left:0;top:0" width="1096" height="769"><path fill="#4f6228" d="M179.69 233.81h17.97v8.014h-17.97zM285.13 233.81h17.97v8.014h-17.97zM557.53 233.81h17.97v8.014h-17.97zM662.97 233.81h17.97v8.014h-17.97zM170.90 241.43h17.97v8.014h-17.97zM276.34 241.43h17.97v8.014h-17.97zM566.31 241.43h17.97v8.014h-17.97zM671.76 241.43h17.97v8.014h-17.97zM91.82 249.04h17.97v8.014h-17.97zM170.90 249.04h17.97v8.014h-17.97zM276.34 249.04h17.97v8.014h-17.97zM566.31 249.04h17.97v8.014h-17.97zM671.76 249.04h17.97v8.014h-17.97zM742.05 249.04h17.97v8.014h-17.97zM83.03 256.66h17.97v8.014h-17.97zM179.69 256.66h17.97v8.014h-17.97zM285.13 256.66h17.97v8.014h-17.97zM355.43 256.66h9.19v8.014h-9.19zM496.02 256.66h9.19v8.014h-9.19zM557.53 256.66h17.97v8.014h-17.97zM662.97 256.66h17.97v8.014h-17.97zM750.84 256.66h17.97v8.014h-17.97zM83.03 264.27h17.97v8.014h-17.97zM188.47 264.27h9.19v8.014h-9.19zM293.92 264.27h9.19v8.014h-9.19zM346.64 264.27h17.97v8.014h-17.97zM496.02 264.27h17.97v8.014h-17.97zM557.53 264.27h9.19v8.014h-9.19zM662.97 264.27h9.19v8.014h-9.19zM750.84 264.27h17.97v8.014h-17.97zM91.82 271.88h17.97v8.014h-17.97zM162.11 271.88h9.19v8.014h-9.19zM197.26 271.88h17.97v8.014h-17.97zM302.70 271.88h17.97v8.014h-17.97zM539.95 271.88h17.97v8.014h-17.97zM645.40 271.88h17.97v8.014h-17.97zM689.33 271.88h9.19v8.014h-9.19zM742.05 271.88h17.97v8.014h-17.97zM100.60 279.50h17.97v8.014h-17.97zM153.33 279.50h17.97v8.014h-17.97zM214.83 279.50h17.97v8.014h-17.97zM267.56 279.50h9.19v8.014h-9.19zM320.28 279.50h17.97v8.014h-17.97zM522.38 279.50h17.97v8.014h-17.97zM583.89 279.50h9.19v8.014h-9.19zM627.82 279.50h17.97v8.014h-17.97zM689.33 279.50h17.97v8.014h-17.97zM733.27 279.50h17.97v8.014h-17.97zM118.18 287.11h17.97v8.014h-17.97zM170.90 287.11h17.97v8.014h-17.97zM232.41 287.11h17.97v8.014h-17.97zM276.34 287.11h17.97v8.014h-17.97zM302.70 287.11h9.19v8.014h-9.19zM337.85 287.11h17.97v8.014h-17.97zM504.81 287.11h17.97v8.014h-17.97zM548.74 287.11h9.19v8.014h-9.19zM566.31 287.11h17.97v8.014h-17.97zM610.25 287.11h17.97v8.014h-17.97zM671.76 287.11h17.97v8.014h-17.97zM715.69 287.11h17.97v8.014h-17.97zM91.82 294.73h281.58v8.014h-281.58zM487.23 294.73h272.80v8.014h-272.80zM118.18 302.34h17.97v8.014h-17.97zM170.90 302.34h17.97v8.014h-17.97zM232.41 302.34h17.97v8.014h-17.97zM276.34 302.34h17.97v8.014h-17.97zM302.70 302.34h9.19v8.014h-9.19zM337.85 302.34h17.97v8.014h-17.97zM504.81 302.34h17.97v8.014h-17.97zM548.74 302.34h9.19v8.014h-9.19zM566.31 302.34h17.97v8.014h-17.97zM610.25 302.34h17.97v8.014h-17.97zM671.76 302.34h17.97v8.014h-17.97zM715.69 302.34h17.97v8.014h-17.97zM100.60 309.95h17.97v8.014h-17.97zM153.33 309.95h17.97v8.014h-17.97zM214.83 309.95h17.97v8.014h-17.97zM267.56 309.95h9.19v8.014h-9.19zM320.28 309.95h17.97v8.014h-17.97zM522.38 309.95h17.97v8.014h-17.97zM583.89 309.95h9.19v8.014h-9.19zM627.82 309.95h17.97v8.014h-17.97zM689.33 309.95h17.97v8.014h-17.97zM733.27 309.95h17.97v8.014h-17.97zM91.82 317.57h17.97v8.014h-17.97zM162.11 317.57h9.19v8.014h-9.19zM197.26 317.57h17.97v8.014h-17.97zM302.70 317.57h17.97v8.014h-17.97zM539.95 317.57h17.97v8.014h-17.97zM645.40 317.57h17.97v8.014h-17.97zM689.33 317.57h9.19v8.014h-9.19zM742.05 317.57h17.97v8.014h-17.97zM83.03 325.18h17.97v8.014h-17.97zM188.47 325.18h9.19v8.014h-9.19zM293.92 325.18h9.19v8.014h-9.19zM346.64 325.18h17.97v8.014h-17.97zM496.02 325.18h17.97v8.014h-17.97zM557.53 325.18h9.19v8.014h-9.19zM662.97 325.18h9.19v8.014h-9.19zM750.84 325.18h17.97v8.014h-17.97zM83.03 332.80h17.97v8.014h-17.97zM179.69 332.80h17.97v8.014h-17.97zM285.13 332.80h17.97v8.014h-17.97zM355.43 332.80h9.19v8.014h-9.19zM496.02 332.80h9.19v8.014h-9.19zM557.53 332.80h17.97v8.014h-17.97zM662.97 332.80h17.97v8.014h-17.97zM750.84 332.80h17.97v8.014h-17.97zM91.82 340.41h17.97v8.014h-17.97zM170.90 340.41h17.97v8.014h-17.97zM276.34 340.41h17.97v8.014h-17.97zM566.31 340.41h17.97v8.014h-17.97zM671.76 340.41h17.97v8.014h-17.97zM742.05 340.41h17.97v8.014h-17.97zM170.90 348.02h17.97v8.014h-17.97zM276.34 348.02h17.97v8.014h-17.97zM566.31 348.02h17.97v8.014h-17.97zM671.76 348.02h17.97v8.014h-17.97zM179.69 355.64h17.97v8.014h-17.97zM285.13 355.64h17.97v8.014h-17.97zM557.53 355.64h17.97v8.014h-17.97zM662.97 355.64h17.97v8.014h-17.97zM188.47 447.01h9.19v8.014h-9.19zM662.97 447.01h9.19v8.014h-9.19zM170.90 454.62h17.97v8.014h-17.97zM671.76 454.62h17.97v8.014h-17.97zM170.90 462.23h9.19v8.014h-9.19zM188.47 462.23h44.34v8.014h-44.34zM627.82 462.23h44.34v8.014h-44.34zM680.55 462.23h9.19v8.014h-9.19zM179.69 469.85h44.34v8.014h-44.34zM636.61 469.85h44.34v8.014h-44.34zM179.69 477.46h17.97v8.014h-17.97zM206.05 477.46h17.97v8.014h-17.97zM636.61 477.46h17.97v8.014h-17.97zM662.97 477.46h17.97v8.014h-17.97zM170.90 485.08h17.97v8.014h-17.97zM206.05 485.08h17.97v8.014h-17.97zM636.61 485.08h17.97v8.014h-17.97zM671.76 485.08h17.97v8.014h-17.97zM188.47 492.69h26.76v8.014h-26.76zM645.40 492.69h26.76v8.014h-26.76zM170.90 500.30h35.55v8.014h-35.55zM654.18 500.30h35.55v8.014h-35.55zM47.88 515.53h17.97v8.014h-17.97zM794.78 515.53h17.97v8.014h-17.97zM39.09 523.15h9.19v8.014h-9.19zM65.45 523.15h9.19v8.014h-9.19zM785.99 523.15h9.19v8.014h-9.19zM812.35 523.15h9.19v8.014h-9.19zM39.09 530.76h9.19v8.014h-9.19zM56.67 530.76h17.97v8.014h-17.97zM126.96 530.76h9.19v8.014h-9.19zM285.13 530.76h9.19v8.014h-9.19zM302.70 530.76h9.19v8.014h-9.19zM416.94 530.76h9.19v8.014h-9.19zM434.51 530.76h9.19v8.014h-9.19zM548.74 530.76h9.19v8.014h-9.19zM566.31 530.76h9.19v8.014h-9.19zM706.91 530.76h9.19v8.014h-9.19zM785.99 530.76h17.97v8.014h-17.97zM812.35 530.76h9.19v8.014h-9.19zM39.09 538.37h26.76v8.014h-26.76zM293.92 538.37h9.19v8.014h-9.19zM425.72 538.37h9.19v8.014h-9.19zM557.53 538.37h9.19v8.014h-9.19zM794.78 538.37h26.76v8.014h-26.76zM39.09 545.99h9.19v8.014h-9.19zM812.35 545.99h9.19v8.014h-9.19zM179.69 568.83h17.97v8.014h-17.97zM285.13 568.83h17.97v8.014h-17.97zM557.53 568.83h17.97v8.014h-17.97zM662.97 568.83h17.97v8.014h-17.97zM170.90 576.44h17.97v8.014h-17.97zM276.34 576.44h17.97v8.014h-17.97zM566.31 576.44h17.97v8.014h-17.97zM671.76 576.44h17.97v8.014h-17.97zM91.82 584.06h17.97v8.014h-17.97zM170.90 584.06h17.97v8.014h-17.97zM276.34 584.06h17.97v8.014h-17.97zM566.31 584.06h17.97v8.014h-17.97zM671.76 584.06h17.97v8.014h-17.97zM742.05 584.06h17.97v8.014h-17.97zM83.03 591.67h17.97v8.014h-17.97zM179.69 591.67h17.97v8.014h-17.97zM285.13 591.67h17.97v8.014h-17.97zM355.43 591.67h9.19v8.014h-9.19zM496.02 591.67h9.19v8.014h-9.19zM557.53 591.67h17.97v8.014h-17.97zM662.97 591.67h17.97v8.014h-17.97zM750.84 591.67h17.97v8.014h-17.97zM83.03 599.29h17.97v8.014h-17.97zM188.47 599.29h9.19v8.014h-9.19zM293.92 599.29h9.19v8.014h-9.19zM346.64 599.29h17.97v8.014h-17.97zM496.02 599.29h17.97v8.014h-17.97zM557.53 599.29h9.19v8.014h-9.19zM662.97 599.29h9.19v8.014h-9.19zM750.84 599.29h17.97v8.014h-17.97zM91.82 606.90h17.97v8.014h-17.97zM162.11 606.90h9.19v8.014h-9.19zM197.26 606.90h17.97v8.014h-17.97zM302.70 606.90h17.97v8.014h-17.97zM539.95 606.90h17.97v8.014h-17.97zM645.40 606.90h17.97v8.014h-17.97zM689.33 606.90h9.19v8.014h-9.19zM742.05 606.90h17.97v8.014h-17.97zM100.60 614.51h17.97v8.014h-17.97zM153.33 614.51h17.97v8.014h-17.97zM214.83 614.51h17.97v8.014h-17.97zM267.56 614.51h9.19v8.014h-9.19zM320.28 614.51h17.97v8.014h-17.97zM522.38 614.51h17.97v8.014h-17.97zM583.89 614.51h9.19v8.014h-9.19zM627.82 614.51h17.97v8.014h-17.97zM689.33 614.51h17.97v8.014h-17.97zM733.27 614.51h17.97v8.014h-17.97zM118.18 622.13h17.97v8.014h-17.97zM170.90 622.13h17.97v8.014h-17.97zM232.41 622.13h17.97v8.014h-17.97zM276.34 622.13h17.97v8.014h-17.97zM302.70 622.13h9.19v8.014h-9.19zM337.85 622.13h17.97v8.014h-17.97zM504.81 622.13h17.97v8.014h-17.97zM548.74 622.13h9.19v8.014h-9.19zM566.31 622.13h17.97v8.014h-17.97zM610.25 622.13h17.97v8.014h-17.97zM671.76 622.13h17.97v8.014h-17.97zM715.69 622.13h17.97v8.014h-17.97zM91.82 629.74h281.58v8.014h-281.58zM487.23 629.74h272.80v8.014h-272.80zM118.18 637.36h17.97v8.014h-17.97zM170.90 637.36h17.97v8.014h-17.97zM232.41 637.36h17.97v8.014h-17.97zM276.34 637.36h17.97v8.014h-17.97zM302.70 637.36h9.19v8.014h-9.19zM337.85 637.36h17.97v8.014h-17.97zM504.81 637.36h17.97v8.014h-17.97zM548.74 637.36h9.19v8.014h-9.19zM566.31 637.36h17.97v8.014h-17.97zM610.25 637.36h17.97v8.014h-17.97zM671.76 637.36h17.97v8.014h-17.97zM715.69 637.36h17.97v8.014h-17.97zM100.60 644.97h17.97v8.014h-17.97zM153.33 644.97h17.97v8.014h-17.97zM214.83 644.97h17.97v8.014h-17.97zM267.56 644.97h9.19v8.014h-9.19zM320.28 644.97h17.97v8.014h-17.97zM522.38 644.97h17.97v8.014h-17.97zM583.89 644.97h9.19v8.014h-9.19zM627.82 644.97h17.97v8.014h-17.97zM689.33 644.97h17.97v8.014h-17.97zM733.27 644.97h17.97v8.014h-17.97zM91.82 652.58h17.97v8.014h-17.97zM162.11 652.58h9.19v8.014h-9.19zM197.26 652.58h17.97v8.014h-17.97zM302.70 652.58h17.97v8.014h-17.97zM539.95 652.58h17.97v8.014h-17.97zM645.40 652.58h17.97v8.014h-17.97zM689.33 652.58h9.19v8.014h-9.19zM742.05 652.58h17.97v8.014h-17.97zM83.03 660.20h17.97v8.014h-17.97zM188.47 660.20h9.19v8.014h-9.19zM293.92 660.20h9.19v8.014h-9.19zM346.64 660.20h17.97v8.014h-17.97zM496.02 660.20h17.97v8.014h-17.97zM557.53 660.20h9.19v8.014h-9.19zM662.97 660.20h9.19v8.014h-9.19zM750.84 660.20h17.97v8.014h-17.97zM83.03 667.81h17.97v8.014h-17.97zM179.69 667.81h17.97v8.014h-17.97zM285.13 667.81h17.97v8.014h-17.97zM355.43 667.81h9.19v8.014h-9.19zM496.02 667.81h9.19v8.014h-9.19zM557.53 667.81h17.97v8.014h-17.97zM662.97 667.81h17.97v8.014h-17.97zM750.84 667.81h17.97v8.014h-17.97zM91.82 675.43h17.97v8.014h-17.97zM170.90 675.43h17.97v8.014h-17.97zM276.34 675.43h17.97v8.014h-17.97zM566.31 675.43h17.97v8.014h-17.97zM671.76 675.43h17.97v8.014h-17.97zM742.05 675.43h17.97v8.014h-17.97zM170.90 683.04h17.97v8.014h-17.97zM276.34 683.04h17.97v8.014h-17.97zM566.31 683.04h17.97v8.014h-17.97zM671.76 683.04h17.97v8.014h-17.97zM179.69 690.65h17.97v8.014h-17.97zM285.13 690.65h17.97v8.014h-17.97zM557.53 690.65h17.97v8.014h-17.97zM662.97 690.65h17.97v8.014h-17.97z"/><path fill="#c00000" d="M337.85 241.43h17.97v8.014h-17.97zM504.81 241.43h17.97v8.014h-17.97zM329.06 249.04h9.19v8.014h-9.19zM346.64 249.04h9.19v8.014h-9.19zM504.81 249.04h9.19v8.014h-9.19zM522.38 249.04h9.19v8.014h-9.19zM329.06 256.66h26.76v8.014h-26.76zM504.81 256.66h26.76v8.014h-26.76zM39.09 271.88h9.19v8.014h-9.19zM803.56 271.88h9.19v8.014h-9.19zM47.88 279.50h35.55v8.014h-35.55zM768.42 279.50h35.55v8.014h-35.55zM39.09 287.11h53.12v8.014h-53.12zM425.72 287.11h9.19v8.014h-9.19zM759.63 287.11h53.12v8.014h-53.12zM30.31 294.73h61.91v8.014h-61.91zM416.94 294.73h26.76v8.014h-26.76zM759.63 294.73h61.91v8.014h-61.91zM39.09 302.34h53.12v8.014h-53.12zM425.72 302.34h9.19v8.014h-9.19zM759.63 302.34h53.12v8.014h-53.12zM47.88 309.95h35.55v8.014h-35.55zM768.42 309.95h35.55v8.014h-35.55zM39.09 317.57h9.19v8.014h-9.19zM803.56 317.57h9.19v8.014h-9.19zM329.06 332.80h26.76v8.014h-26.76zM504.81 332.80h26.76v8.014h-26.76zM329.06 340.41h9.19v8.014h-9.19zM346.64 340.41h9.19v8.014h-9.19zM504.81 340.41h9.19v8.014h-9.19zM522.38 340.41h9.19v8.014h-9.19zM337.85 348.02h17.97v8.014h-17.97zM504.81 348.02h17.97v8.014h-17.97zM416.94 378.48h9.19v8.014h-9.19zM443.30 386.09h9.19v8.014h-9.19zM399.36 393.71h9.19v8.014h-9.19zM460.87 401.32h9.19v8.014h-9.19zM373.00 416.55h9.19v8.014h-9.19zM478.44 416.55h9.19v8.014h-9.19zM373.00 439.39h9.19v8.014h-9.19zM469.66 439.39h9.19v8.014h-9.19zM109.39 447.01h17.97v8.014h-17.97zM733.27 447.01h17.97v8.014h-17.97zM83.03 454.62h9.19v8.014h-9.19zM109.39 454.62h26.76v8.014h-26.76zM144.54 454.62h9.19v8.014h-9.19zM381.79 454.62h9.19v8.014h-9.19zM478.44 454.62h9.19v8.014h-9.19zM706.91 454.62h9.19v8.014h-9.19zM724.48 454.62h26.76v8.014h-26.76zM768.42 454.62h9.19v8.014h-9.19zM91.82 462.23h17.97v8.014h-17.97zM118.18 462.23h9.19v8.014h-9.19zM144.54 462.23h17.97v8.014h-17.97zM698.12 462.23h17.97v8.014h-17.97zM733.27 462.23h9.19v8.014h-9.19zM750.84 462.23h17.97v8.014h-17.97zM91.82 469.85h26.76v8.014h-26.76zM126.96 469.85h9.19v8.014h-9.19zM144.54 469.85h26.76v8.014h-26.76zM373.00 469.85h35.55v8.014h-35.55zM452.08 469.85h35.55v8.014h-35.55zM689.33 469.85h26.76v8.014h-26.76zM724.48 469.85h9.19v8.014h-9.19zM742.05 469.85h26.76v8.014h-26.76zM65.45 477.46h17.97v8.014h-17.97zM100.60 477.46h9.19v8.014h-9.19zM126.96 477.46h9.19v8.014h-9.19zM144.54 477.46h26.76v8.014h-26.76zM373.00 477.46h44.34v8.014h-44.34zM443.30 477.46h44.34v8.014h-44.34zM689.33 477.46h26.76v8.014h-26.76zM724.48 477.46h9.19v8.014h-9.19zM750.84 477.46h9.19v8.014h-9.19zM777.20 477.46h17.97v8.014h-17.97zM83.03 485.08h9.19v8.014h-9.19zM118.18 485.08h17.97v8.014h-17.97zM144.54 485.08h9.19v8.014h-9.19zM373.00 485.08h35.55v8.014h-35.55zM452.08 485.08h35.55v8.014h-35.55zM706.91 485.08h9.19v8.014h-9.19zM724.48 485.08h17.97v8.014h-17.97zM768.42 485.08h9.19v8.014h-9.19zM56.67 492.69h44.34v8.014h-44.34zM109.39 492.69h17.97v8.014h-17.97zM153.33 492.69h9.19v8.014h-9.19zM293.92 492.69h9.19v8.014h-9.19zM373.00 492.69h26.76v8.014h-26.76zM425.72 492.69h9.19v8.014h-9.19zM460.87 492.69h26.76v8.014h-26.76zM557.53 492.69h9.19v8.014h-9.19zM698.12 492.69h9.19v8.014h-9.19zM733.27 492.69h17.97v8.014h-17.97zM759.63 492.69h44.34v8.014h-44.34zM65.45 500.30h9.19v8.014h-9.19zM83.03 500.30h26.76v8.014h-26.76zM144.54 500.30h26.76v8.014h-26.76zM285.13 500.30h9.19v8.014h-9.19zM302.70 500.30h9.19v8.014h-9.19zM373.00 500.30h26.76v8.014h-26.76zM416.94 500.30h9.19v8.014h-9.19zM434.51 500.30h9.19v8.014h-9.19zM460.87 500.30h26.76v8.014h-26.76zM548.74 500.30h9.19v8.014h-9.19zM566.31 500.30h9.19v8.014h-9.19zM689.33 500.30h26.76v8.014h-26.76zM750.84 500.30h26.76v8.014h-26.76zM785.99 500.30h9.19v8.014h-9.19zM109.39 507.92h53.12v8.014h-53.12zM293.92 507.92h9.19v8.014h-9.19zM373.00 507.92h9.19v8.014h-9.19zM390.57 507.92h9.19v8.014h-9.19zM425.72 507.92h9.19v8.014h-9.19zM460.87 507.92h9.19v8.014h-9.19zM478.44 507.92h9.19v8.014h-9.19zM557.53 507.92h9.19v8.014h-9.19zM698.12 507.92h53.12v8.014h-53.12zM118.18 515.53h35.55v8.014h-35.55zM373.00 515.53h26.76v8.014h-26.76zM460.87 515.53h26.76v8.014h-26.76zM706.91 515.53h35.55v8.014h-35.55zM126.96 523.15h26.76v8.014h-26.76zM373.00 523.15h26.76v8.014h-26.76zM460.87 523.15h26.76v8.014h-26.76zM706.91 523.15h26.76v8.014h-26.76zM373.00 530.76h26.76v8.014h-26.76zM460.87 530.76h26.76v8.014h-26.76zM381.79 538.37h26.76v8.014h-26.76zM452.08 538.37h26.76v8.014h-26.76zM390.57 545.99h79.48v8.014h-79.48zM337.85 576.44h17.97v8.014h-17.97zM504.81 576.44h17.97v8.014h-17.97zM329.06 584.06h9.19v8.014h-9.19zM346.64 584.06h9.19v8.014h-9.19zM504.81 584.06h9.19v8.014h-9.19zM522.38 584.06h9.19v8.014h-9.19zM329.06 591.67h26.76v8.014h-26.76zM504.81 591.67h26.76v8.014h-26.76zM39.09 606.90h9.19v8.014h-9.19zM803.56 606.90h9.19v8.014h-9.19zM47.88 614.51h35.55v8.014h-35.55zM768.42 614.51h35.55v8.014h-35.55zM39.09 622.13h53.12v8.014h-53.12zM425.72 622.13h9.19v8.014h-9.19zM759.63 622.13h53.12v8.014h-53.12zM30.31 629.74h61.91v8.014h-61.91zM416.94 629.74h26.76v8.014h-26.76zM759.63 629.74h61.91v8.014h-61.91zM39.09 637.36h53.12v8.014h-53.12zM425.72 637.36h9.19v8.014h-9.19zM759.63 637.36h53.12v8.014h-53.12zM47.88 644.97h35.55v8.014h-35.55zM768.42 644.97h35.55v8.014h-35.55zM39.09 652.58h9.19v8.014h-9.19zM803.56 652.58h9.19v8.014h-9.19zM329.06 667.81h26.76v8.014h-26.76zM504.81 667.81h26.76v8.014h-26.76zM329.06 675.43h9.19v8.014h-9.19zM346.64 675.43h9.19v8.014h-9.19zM504.81 675.43h9.19v8.014h-9.19zM522.38 675.43h9.19v8.014h-9.19zM337.85 683.04h17.97v8.014h-17.97zM504.81 683.04h17.97v8.014h-17.97z"/><path fill="#604a7b" d="M399.36 241.43h17.97v8.014h-17.97zM443.30 241.43h17.97v8.014h-17.97zM390.57 249.04h35.55v8.014h-35.55zM434.51 249.04h35.55v8.014h-35.55zM144.54 256.66h17.97v8.014h-17.97zM249.98 256.66h17.97v8.014h-17.97zM390.57 256.66h35.55v8.014h-35.55zM434.51 256.66h35.55v8.014h-35.55zM592.68 256.66h17.97v8.014h-17.97zM698.12 256.66h17.97v8.014h-17.97zM135.75 264.27h9.19v8.014h-9.19zM153.33 264.27h9.19v8.014h-9.19zM241.20 264.27h9.19v8.014h-9.19zM258.77 264.27h9.19v8.014h-9.19zM373.00 264.27h17.97v8.014h-17.97zM399.36 264.27h26.76v8.014h-26.76zM434.51 264.27h26.76v8.014h-26.76zM469.66 264.27h17.97v8.014h-17.97zM592.68 264.27h9.19v8.014h-9.19zM610.25 264.27h9.19v8.014h-9.19zM698.12 264.27h9.19v8.014h-9.19zM715.69 264.27h9.19v8.014h-9.19zM135.75 271.88h26.76v8.014h-26.76zM241.20 271.88h26.76v8.014h-26.76zM364.21 271.88h35.55v8.014h-35.55zM408.15 271.88h9.19v8.014h-9.19zM425.72 271.88h9.19v8.014h-9.19zM443.30 271.88h9.19v8.014h-9.19zM460.87 271.88h35.55v8.014h-35.55zM592.68 271.88h26.76v8.014h-26.76zM698.12 271.88h26.76v8.014h-26.76zM364.21 279.50h44.34v8.014h-44.34zM452.08 279.50h44.34v8.014h-44.34zM373.00 287.11h26.76v8.014h-26.76zM460.87 287.11h26.76v8.014h-26.76zM399.36 294.73h9.19v8.014h-9.19zM452.08 294.73h9.19v8.014h-9.19zM373.00 302.34h26.76v8.014h-26.76zM460.87 302.34h26.76v8.014h-26.76zM364.21 309.95h44.34v8.014h-44.34zM452.08 309.95h44.34v8.014h-44.34zM135.75 317.57h26.76v8.014h-26.76zM241.20 317.57h26.76v8.014h-26.76zM364.21 317.57h35.55v8.014h-35.55zM408.15 317.57h9.19v8.014h-9.19zM425.72 317.57h9.19v8.014h-9.19zM443.30 317.57h9.19v8.014h-9.19zM460.87 317.57h35.55v8.014h-35.55zM592.68 317.57h26.76v8.014h-26.76zM698.12 317.57h26.76v8.014h-26.76zM135.75 325.18h9.19v8.014h-9.19zM153.33 325.18h9.19v8.014h-9.19zM241.20 325.18h9.19v8.014h-9.19zM258.77 325.18h9.19v8.014h-9.19zM373.00 325.18h17.97v8.014h-17.97zM399.36 325.18h26.76v8.014h-26.76zM434.51 325.18h26.76v8.014h-26.76zM469.66 325.18h17.97v8.014h-17.97zM592.68 325.18h9.19v8.014h-9.19zM610.25 325.18h9.19v8.014h-9.19zM698.12 325.18h9.19v8.014h-9.19zM715.69 325.18h9.19v8.014h-9.19zM144.54 332.80h17.97v8.014h-17.97zM249.98 332.80h17.97v8.014h-17.97zM390.57 332.80h35.55v8.014h-35.55zM434.51 332.80h35.55v8.014h-35.55zM592.68 332.80h17.97v8.014h-17.97zM698.12 332.80h17.97v8.014h-17.97zM390.57 340.41h35.55v8.014h-35.55zM434.51 340.41h35.55v8.014h-35.55zM399.36 348.02h17.97v8.014h-17.97zM443.30 348.02h17.97v8.014h-17.97zM162.11 431.78h9.19v8.014h-9.19zM179.69 431.78h9.19v8.014h-9.19zM671.76 431.78h9.19v8.014h-9.19zM689.33 431.78h9.19v8.014h-9.19zM170.90 439.39h9.19v8.014h-9.19zM680.55 439.39h9.19v8.014h-9.19zM241.20 469.85h35.55v8.014h-35.55zM320.28 469.85h35.55v8.014h-35.55zM241.20 477.46h44.34v8.014h-44.34zM311.49 477.46h44.34v8.014h-44.34zM241.20 485.08h35.55v8.014h-35.55zM320.28 485.08h35.55v8.014h-35.55zM241.20 492.69h26.76v8.014h-26.76zM329.06 492.69h26.76v8.014h-26.76zM241.20 500.30h26.76v8.014h-26.76zM329.06 500.30h26.76v8.014h-26.76zM241.20 507.92h9.19v8.014h-9.19zM258.77 507.92h9.19v8.014h-9.19zM329.06 507.92h9.19v8.014h-9.19zM346.64 507.92h9.19v8.014h-9.19zM575.10 507.92h9.19v8.014h-9.19zM241.20 515.53h26.76v8.014h-26.76zM329.06 515.53h26.76v8.014h-26.76zM566.31 515.53h9.19v8.014h-9.19zM583.89 515.53h9.19v8.014h-9.19zM162.11 523.15h9.19v8.014h-9.19zM179.69 523.15h9.19v8.014h-9.19zM241.20 523.15h26.76v8.014h-26.76zM329.06 523.15h26.76v8.014h-26.76zM575.10 523.15h9.19v8.014h-9.19zM671.76 523.15h9.19v8.014h-9.19zM689.33 523.15h9.19v8.014h-9.19zM91.82 530.76h9.19v8.014h-9.19zM109.39 530.76h9.19v8.014h-9.19zM170.90 530.76h9.19v8.014h-9.19zM241.20 530.76h26.76v8.014h-26.76zM329.06 530.76h26.76v8.014h-26.76zM680.55 530.76h9.19v8.014h-9.19zM742.05 530.76h9.19v8.014h-9.19zM759.63 530.76h9.19v8.014h-9.19zM100.60 538.37h9.19v8.014h-9.19zM249.98 538.37h26.76v8.014h-26.76zM320.28 538.37h26.76v8.014h-26.76zM750.84 538.37h9.19v8.014h-9.19zM258.77 545.99h79.48v8.014h-79.48zM399.36 576.44h17.97v8.014h-17.97zM443.30 576.44h17.97v8.014h-17.97zM390.57 584.06h35.55v8.014h-35.55zM434.51 584.06h35.55v8.014h-35.55zM144.54 591.67h17.97v8.014h-17.97zM249.98 591.67h17.97v8.014h-17.97zM390.57 591.67h35.55v8.014h-35.55zM434.51 591.67h35.55v8.014h-35.55zM592.68 591.67h17.97v8.014h-17.97zM698.12 591.67h17.97v8.014h-17.97zM135.75 599.29h9.19v8.014h-9.19zM153.33 599.29h9.19v8.014h-9.19zM241.20 599.29h9.19v8.014h-9.19zM258.77 599.29h9.19v8.014h-9.19zM373.00 599.29h17.97v8.014h-17.97zM399.36 599.29h26.76v8.014h-26.76zM434.51 599.29h26.76v8.014h-26.76zM469.66 599.29h17.97v8.014h-17.97zM592.68 599.29h9.19v8.014h-9.19zM610.25 599.29h9.19v8.014h-9.19zM698.12 599.29h9.19v8.014h-9.19zM715.69 599.29h9.19v8.014h-9.19zM135.75 606.90h26.76v8.014h-26.76zM241.20 606.90h26.76v8.014h-26.76zM364.21 606.90h35.55v8.014h-35.55zM408.15 606.90h9.19v8.014h-9.19zM425.72 606.90h9.19v8.014h-9.19zM443.30 606.90h9.19v8.014h-9.19zM460.87 606.90h35.55v8.014h-35.55zM592.68 606.90h26.76v8.014h-26.76zM698.12 606.90h26.76v8.014h-26.76zM364.21 614.51h44.34v8.014h-44.34zM452.08 614.51h44.34v8.014h-44.34zM373.00 622.13h26.76v8.014h-26.76zM460.87 622.13h26.76v8.014h-26.76zM399.36 629.74h9.19v8.014h-9.19zM452.08 629.74h9.19v8.014h-9.19zM373.00 637.36h26.76v8.014h-26.76zM460.87 637.36h26.76v8.014h-26.76zM364.21 644.97h44.34v8.014h-44.34zM452.08 644.97h44.34v8.014h-44.34zM135.75 652.58h26.76v8.014h-26.76zM241.20 652.58h26.76v8.014h-26.76zM364.21 652.58h35.55v8.014h-35.55zM408.15 652.58h9.19v8.014h-9.19zM425.72 652.58h9.19v8.014h-9.19zM443.30 652.58h9.19v8.014h-9.19zM460.87 652.58h35.55v8.014h-35.55zM592.68 652.58h26.76v8.014h-26.76zM698.12 652.58h26.76v8.014h-26.76zM135.75 660.20h9.19v8.014h-9.19zM153.33 660.20h9.19v8.014h-9.19zM241.20 660.20h9.19v8.014h-9.19zM258.77 660.20h9.19v8.014h-9.19zM373.00 660.20h17.97v8.014h-17.97zM399.36 660.20h26.76v8.014h-26.76zM434.51 660.20h26.76v8.014h-26.76zM469.66 660.20h17.97v8.014h-17.97zM592.68 660.20h9.19v8.014h-9.19zM610.25 660.20h9.19v8.014h-9.19zM698.12 660.20h9.19v8.014h-9.19zM715.69 660.20h9.19v8.014h-9.19zM144.54 667.81h17.97v8.014h-17.97zM249.98 667.81h17.97v8.014h-17.97zM390.57 667.81h35.55v8.014h-35.55zM434.51 667.81h35.55v8.014h-35.55zM592.68 667.81h17.97v8.014h-17.97zM698.12 667.81h17.97v8.014h-17.97zM390.57 675.43h35.55v8.014h-35.55zM434.51 675.43h35.55v8.014h-35.55zM399.36 683.04h17.97v8.014h-17.97zM443.30 683.04h17.97v8.014h-17.97z"/><path fill="#ffff00" d="M337.85 249.04h9.19v8.014h-9.19zM513.59 249.04h9.19v8.014h-9.19zM144.54 264.27h9.19v8.014h-9.19zM249.98 264.27h9.19v8.014h-9.19zM601.46 264.27h9.19v8.014h-9.19zM706.91 264.27h9.19v8.014h-9.19zM144.54 325.18h9.19v8.014h-9.19zM249.98 325.18h9.19v8.014h-9.19zM601.46 325.18h9.19v8.014h-9.19zM706.91 325.18h9.19v8.014h-9.19zM337.85 340.41h9.19v8.014h-9.19zM513.59 340.41h9.19v8.014h-9.19zM408.15 378.48h9.19v8.014h-9.19zM425.72 378.48h26.76v8.014h-26.76zM390.57 386.09h53.12v8.014h-53.12zM452.08 386.09h17.97v8.014h-17.97zM381.79 393.71h17.97v8.014h-17.97zM408.15 393.71h70.70v8.014h-70.70zM373.00 401.32h35.55v8.014h-35.55zM452.08 401.32h9.19v8.014h-9.19zM469.66 401.32h17.97v8.014h-17.97zM373.00 408.94h26.76v8.014h-26.76zM460.87 408.94h26.76v8.014h-26.76zM381.79 416.55h9.19v8.014h-9.19zM469.66 416.55h9.19v8.014h-9.19zM373.00 424.16h17.97v8.014h-17.97zM469.66 424.16h17.97v8.014h-17.97zM170.90 431.78h9.19v8.014h-9.19zM373.00 431.78h17.97v8.014h-17.97zM469.66 431.78h17.97v8.014h-17.97zM680.55 431.78h9.19v8.014h-9.19zM381.79 439.39h9.19v8.014h-9.19zM478.44 439.39h9.19v8.014h-9.19zM373.00 447.01h17.97v8.014h-17.97zM469.66 447.01h17.97v8.014h-17.97zM373.00 454.62h9.19v8.014h-9.19zM390.57 454.62h9.19v8.014h-9.19zM460.87 454.62h17.97v8.014h-17.97zM373.00 462.23h44.34v8.014h-44.34zM443.30 462.23h44.34v8.014h-44.34zM408.15 469.85h44.34v8.014h-44.34zM416.94 477.46h9.19v8.014h-9.19zM434.51 477.46h9.19v8.014h-9.19zM408.15 485.08h9.19v8.014h-9.19zM443.30 485.08h9.19v8.014h-9.19zM293.92 500.30h9.19v8.014h-9.19zM425.72 500.30h9.19v8.014h-9.19zM557.53 500.30h9.19v8.014h-9.19zM276.34 515.53h9.19v8.014h-9.19zM311.49 515.53h9.19v8.014h-9.19zM408.15 515.53h9.19v8.014h-9.19zM443.30 515.53h9.19v8.014h-9.19zM539.95 515.53h9.19v8.014h-9.19zM575.10 515.53h9.19v8.014h-9.19zM170.90 523.15h9.19v8.014h-9.19zM680.55 523.15h9.19v8.014h-9.19zM100.60 530.76h9.19v8.014h-9.19zM750.84 530.76h9.19v8.014h-9.19zM337.85 584.06h9.19v8.014h-9.19zM513.59 584.06h9.19v8.014h-9.19zM144.54 599.29h9.19v8.014h-9.19zM249.98 599.29h9.19v8.014h-9.19zM601.46 599.29h9.19v8.014h-9.19zM706.91 599.29h9.19v8.014h-9.19zM144.54 660.20h9.19v8.014h-9.19zM249.98 660.20h9.19v8.014h-9.19zM601.46 660.20h9.19v8.014h-9.19zM706.91 660.20h9.19v8.014h-9.19zM337.85 675.43h9.19v8.014h-9.19zM513.59 675.43h9.19v8.014h-9.19z"/><path fill="#f5508a" d="M416.94 279.50h26.76v8.014h-26.76zM408.15 287.11h17.97v8.014h-17.97zM434.51 287.11h17.97v8.014h-17.97zM408.15 294.73h9.19v8.014h-9.19zM443.30 294.73h9.19v8.014h-9.19zM408.15 302.34h17.97v8.014h-17.97zM434.51 302.34h17.97v8.014h-17.97zM416.94 309.95h26.76v8.014h-26.76zM276.34 378.48h9.19v8.014h-9.19zM293.92 378.48h26.76v8.014h-26.76zM258.77 386.09h53.12v8.014h-53.12zM320.28 386.09h17.97v8.014h-17.97zM249.98 393.71h17.97v8.014h-17.97zM276.34 393.71h70.70v8.014h-70.70zM241.20 401.32h35.55v8.014h-35.55zM320.28 401.32h9.19v8.014h-9.19zM337.85 401.32h17.97v8.014h-17.97zM241.20 408.94h26.76v8.014h-26.76zM329.06 408.94h26.76v8.014h-26.76zM249.98 416.55h9.19v8.014h-9.19zM337.85 416.55h9.19v8.014h-9.19zM241.20 424.16h17.97v8.014h-17.97zM337.85 424.16h17.97v8.014h-17.97zM241.20 431.78h17.97v8.014h-17.97zM337.85 431.78h17.97v8.014h-17.97zM100.60 439.39h26.76v8.014h-26.76zM135.75 439.39h17.97v8.014h-17.97zM249.98 439.39h9.19v8.014h-9.19zM346.64 439.39h9.19v8.014h-9.19zM706.91 439.39h17.97v8.014h-17.97zM733.27 439.39h26.76v8.014h-26.76zM74.24 447.01h35.55v8.014h-35.55zM126.96 447.01h35.55v8.014h-35.55zM241.20 447.01h17.97v8.014h-17.97zM337.85 447.01h17.97v8.014h-17.97zM698.12 447.01h35.55v8.014h-35.55zM750.84 447.01h35.55v8.014h-35.55zM74.24 454.62h9.19v8.014h-9.19zM91.82 454.62h17.97v8.014h-17.97zM135.75 454.62h9.19v8.014h-9.19zM153.33 454.62h17.97v8.014h-17.97zM241.20 454.62h9.19v8.014h-9.19zM258.77 454.62h9.19v8.014h-9.19zM329.06 454.62h17.97v8.014h-17.97zM689.33 454.62h17.97v8.014h-17.97zM715.69 454.62h9.19v8.014h-9.19zM750.84 454.62h17.97v8.014h-17.97zM777.20 454.62h9.19v8.014h-9.19zM65.45 462.23h26.76v8.014h-26.76zM126.96 462.23h17.97v8.014h-17.97zM162.11 462.23h9.19v8.014h-9.19zM241.20 462.23h44.34v8.014h-44.34zM311.49 462.23h44.34v8.014h-44.34zM689.33 462.23h9.19v8.014h-9.19zM715.69 462.23h17.97v8.014h-17.97zM768.42 462.23h26.76v8.014h-26.76zM56.67 469.85h17.97v8.014h-17.97zM135.75 469.85h9.19v8.014h-9.19zM170.90 469.85h9.19v8.014h-9.19zM276.34 469.85h44.34v8.014h-44.34zM504.81 469.85h35.55v8.014h-35.55zM583.89 469.85h35.55v8.014h-35.55zM680.55 469.85h9.19v8.014h-9.19zM715.69 469.85h9.19v8.014h-9.19zM785.99 469.85h17.97v8.014h-17.97zM56.67 477.46h9.19v8.014h-9.19zM135.75 477.46h9.19v8.014h-9.19zM170.90 477.46h9.19v8.014h-9.19zM285.13 477.46h9.19v8.014h-9.19zM302.70 477.46h9.19v8.014h-9.19zM504.81 477.46h44.34v8.014h-44.34zM575.10 477.46h44.34v8.014h-44.34zM680.55 477.46h9.19v8.014h-9.19zM715.69 477.46h9.19v8.014h-9.19zM794.78 477.46h9.19v8.014h-9.19zM56.67 485.08h17.97v8.014h-17.97zM135.75 485.08h9.19v8.014h-9.19zM153.33 485.08h17.97v8.014h-17.97zM276.34 485.08h9.19v8.014h-9.19zM311.49 485.08h9.19v8.014h-9.19zM504.81 485.08h35.55v8.014h-35.55zM583.89 485.08h35.55v8.014h-35.55zM689.33 485.08h17.97v8.014h-17.97zM715.69 485.08h9.19v8.014h-9.19zM785.99 485.08h17.97v8.014h-17.97zM47.88 492.69h9.19v8.014h-9.19zM126.96 492.69h26.76v8.014h-26.76zM504.81 492.69h26.76v8.014h-26.76zM592.68 492.69h26.76v8.014h-26.76zM706.91 492.69h26.76v8.014h-26.76zM803.56 492.69h9.19v8.014h-9.19zM47.88 500.30h17.97v8.014h-17.97zM74.24 500.30h9.19v8.014h-9.19zM109.39 500.30h35.55v8.014h-35.55zM504.81 500.30h26.76v8.014h-26.76zM592.68 500.30h26.76v8.014h-26.76zM715.69 500.30h35.55v8.014h-35.55zM777.20 500.30h9.19v8.014h-9.19zM794.78 500.30h17.97v8.014h-17.97zM56.67 507.92h53.12v8.014h-53.12zM276.34 507.92h9.19v8.014h-9.19zM443.30 507.92h9.19v8.014h-9.19zM504.81 507.92h9.19v8.014h-9.19zM522.38 507.92h9.19v8.014h-9.19zM592.68 507.92h9.19v8.014h-9.19zM610.25 507.92h9.19v8.014h-9.19zM750.84 507.92h53.12v8.014h-53.12zM65.45 515.53h26.76v8.014h-26.76zM267.56 515.53h9.19v8.014h-9.19zM285.13 515.53h9.19v8.014h-9.19zM434.51 515.53h9.19v8.014h-9.19zM452.08 515.53h9.19v8.014h-9.19zM504.81 515.53h26.76v8.014h-26.76zM592.68 515.53h26.76v8.014h-26.76zM768.42 515.53h26.76v8.014h-26.76zM74.24 523.15h9.19v8.014h-9.19zM276.34 523.15h9.19v8.014h-9.19zM443.30 523.15h9.19v8.014h-9.19zM504.81 523.15h26.76v8.014h-26.76zM592.68 523.15h26.76v8.014h-26.76zM777.20 523.15h9.19v8.014h-9.19zM504.81 530.76h26.76v8.014h-26.76zM592.68 530.76h26.76v8.014h-26.76zM513.59 538.37h26.76v8.014h-26.76zM583.89 538.37h26.76v8.014h-26.76zM522.38 545.99h79.48v8.014h-79.48zM416.94 614.51h26.76v8.014h-26.76zM408.15 622.13h17.97v8.014h-17.97zM434.51 622.13h17.97v8.014h-17.97zM408.15 629.74h9.19v8.014h-9.19zM443.30 629.74h9.19v8.014h-9.19zM408.15 637.36h17.97v8.014h-17.97zM434.51 637.36h17.97v8.014h-17.97zM416.94 644.97h26.76v8.014h-26.76z"/><path fill="#558ed5" d="M285.13 378.48h9.19v8.014h-9.19zM539.95 378.48h9.19v8.014h-9.19zM557.53 378.48h26.76v8.014h-26.76zM311.49 386.09h9.19v8.014h-9.19zM522.38 386.09h53.12v8.014h-53.12zM583.89 386.09h17.97v8.014h-17.97zM267.56 393.71h9.19v8.014h-9.19zM513.59 393.71h17.97v8.014h-17.97zM539.95 393.71h70.70v8.014h-70.70zM329.06 401.32h9.19v8.014h-9.19zM504.81 401.32h35.55v8.014h-35.55zM583.89 401.32h9.19v8.014h-9.19zM601.46 401.32h17.97v8.014h-17.97zM504.81 408.94h26.76v8.014h-26.76zM592.68 408.94h26.76v8.014h-26.76zM241.20 416.55h9.19v8.014h-9.19zM346.64 416.55h9.19v8.014h-9.19zM513.59 416.55h9.19v8.014h-9.19zM601.46 416.55h9.19v8.014h-9.19zM504.81 424.16h17.97v8.014h-17.97zM601.46 424.16h17.97v8.014h-17.97zM504.81 431.78h17.97v8.014h-17.97zM601.46 431.78h17.97v8.014h-17.97zM241.20 439.39h9.19v8.014h-9.19zM337.85 439.39h9.19v8.014h-9.19zM513.59 439.39h9.19v8.014h-9.19zM610.25 439.39h9.19v8.014h-9.19zM504.81 447.01h17.97v8.014h-17.97zM601.46 447.01h17.97v8.014h-17.97zM249.98 454.62h9.19v8.014h-9.19zM346.64 454.62h9.19v8.014h-9.19zM504.81 454.62h9.19v8.014h-9.19zM522.38 454.62h9.19v8.014h-9.19zM592.68 454.62h17.97v8.014h-17.97zM504.81 462.23h44.34v8.014h-44.34zM575.10 462.23h44.34v8.014h-44.34zM539.95 469.85h44.34v8.014h-44.34zM548.74 477.46h9.19v8.014h-9.19zM566.31 477.46h9.19v8.014h-9.19zM539.95 485.08h9.19v8.014h-9.19zM575.10 485.08h9.19v8.014h-9.19zM311.49 507.92h9.19v8.014h-9.19zM408.15 507.92h9.19v8.014h-9.19zM539.95 507.92h9.19v8.014h-9.19zM302.70 515.53h9.19v8.014h-9.19zM320.28 515.53h9.19v8.014h-9.19zM399.36 515.53h9.19v8.014h-9.19zM416.94 515.53h9.19v8.014h-9.19zM531.17 515.53h9.19v8.014h-9.19zM548.74 515.53h9.19v8.014h-9.19zM311.49 523.15h9.19v8.014h-9.19zM408.15 523.15h9.19v8.014h-9.19zM539.95 523.15h9.19v8.014h-9.19z"/><path fill="#bfbfbf" d="M548.74 378.48h9.19v8.014h-9.19zM575.10 386.09h9.19v8.014h-9.19zM531.17 393.71h9.19v8.014h-9.19zM592.68 401.32h9.19v8.014h-9.19zM504.81 416.55h9.19v8.014h-9.19zM610.25 416.55h9.19v8.014h-9.19zM504.81 439.39h9.19v8.014h-9.19zM601.46 439.39h9.19v8.014h-9.19zM513.59 454.62h9.19v8.014h-9.19zM610.25 454.62h9.19v8.014h-9.19zM83.03 530.76h9.19v8.014h-9.19zM118.18 530.76h9.19v8.014h-9.19zM83.03 538.37h17.97v8.014h-17.97zM109.39 538.37h17.97v8.014h-17.97zM91.82 545.99h26.76v8.014h-26.76z"/><path fill="#000000" d="M276.34 401.32h44.34v8.014h-44.34zM408.15 401.32h44.34v8.014h-44.34zM539.95 401.32h44.34v8.014h-44.34zM267.56 408.94h61.91v8.014h-61.91zM399.36 408.94h61.91v8.014h-61.91zM531.17 408.94h61.91v8.014h-61.91zM258.77 416.55h17.97v8.014h-17.97zM285.13 416.55h53.12v8.014h-53.12zM390.57 416.55h17.97v8.014h-17.97zM416.94 416.55h53.12v8.014h-53.12zM522.38 416.55h17.97v8.014h-17.97zM548.74 416.55h53.12v8.014h-53.12zM258.77 424.16h9.19v8.014h-9.19zM293.92 424.16h44.34v8.014h-44.34zM390.57 424.16h9.19v8.014h-9.19zM425.72 424.16h44.34v8.014h-44.34zM522.38 424.16h9.19v8.014h-9.19zM557.53 424.16h44.34v8.014h-44.34zM267.56 439.39h9.19v8.014h-9.19zM320.28 439.39h9.19v8.014h-9.19zM399.36 439.39h9.19v8.014h-9.19zM452.08 439.39h9.19v8.014h-9.19zM531.17 439.39h9.19v8.014h-9.19zM583.89 439.39h9.19v8.014h-9.19z"/><path fill="#b2a1c7" d="M162.11 416.55h26.76v8.014h-26.76zM671.76 416.55h26.76v8.014h-26.76zM153.33 424.16h44.34v8.014h-44.34zM662.97 424.16h44.34v8.014h-44.34zM109.39 462.23h9.19v8.014h-9.19zM742.05 462.23h9.19v8.014h-9.19zM74.24 469.85h17.97v8.014h-17.97zM118.18 469.85h9.19v8.014h-9.19zM733.27 469.85h9.19v8.014h-9.19zM768.42 469.85h17.97v8.014h-17.97zM83.03 477.46h17.97v8.014h-17.97zM109.39 477.46h17.97v8.014h-17.97zM733.27 477.46h17.97v8.014h-17.97zM759.63 477.46h17.97v8.014h-17.97zM74.24 485.08h9.19v8.014h-9.19zM91.82 485.08h26.76v8.014h-26.76zM742.05 485.08h26.76v8.014h-26.76zM777.20 485.08h9.19v8.014h-9.19zM100.60 492.69h9.19v8.014h-9.19zM750.84 492.69h9.19v8.014h-9.19zM162.11 507.92h26.76v8.014h-26.76zM671.76 507.92h26.76v8.014h-26.76zM91.82 515.53h26.76v8.014h-26.76zM153.33 515.53h44.34v8.014h-44.34zM662.97 515.53h44.34v8.014h-44.34zM742.05 515.53h26.76v8.014h-26.76zM83.03 523.15h44.34v8.014h-44.34zM733.27 523.15h44.34v8.014h-44.34z"/><path fill="#fcd5b5" d="M276.34 416.55h9.19v8.014h-9.19zM408.15 416.55h9.19v8.014h-9.19zM539.95 416.55h9.19v8.014h-9.19zM267.56 424.16h26.76v8.014h-26.76zM399.36 424.16h26.76v8.014h-26.76zM531.17 424.16h26.76v8.014h-26.76zM258.77 431.78h79.48v8.014h-79.48zM390.57 431.78h79.48v8.014h-79.48zM522.38 431.78h79.48v8.014h-79.48zM258.77 439.39h9.19v8.014h-9.19zM276.34 439.39h44.34v8.014h-44.34zM329.06 439.39h9.19v8.014h-9.19zM390.57 439.39h9.19v8.014h-9.19zM408.15 439.39h44.34v8.014h-44.34zM460.87 439.39h9.19v8.014h-9.19zM522.38 439.39h9.19v8.014h-9.19zM539.95 439.39h44.34v8.014h-44.34zM592.68 439.39h9.19v8.014h-9.19zM258.77 447.01h79.48v8.014h-79.48zM390.57 447.01h79.48v8.014h-79.48zM522.38 447.01h79.48v8.014h-79.48zM267.56 454.62h61.91v8.014h-61.91zM399.36 454.62h61.91v8.014h-61.91zM531.17 454.62h61.91v8.014h-61.91zM285.13 462.23h26.76v8.014h-26.76zM416.94 462.23h26.76v8.014h-26.76zM548.74 462.23h26.76v8.014h-26.76zM293.92 477.46h9.19v8.014h-9.19zM425.72 477.46h9.19v8.014h-9.19zM557.53 477.46h9.19v8.014h-9.19zM285.13 485.08h26.76v8.014h-26.76zM416.94 485.08h26.76v8.014h-26.76zM548.74 485.08h26.76v8.014h-26.76zM267.56 492.69h26.76v8.014h-26.76zM302.70 492.69h26.76v8.014h-26.76zM399.36 492.69h26.76v8.014h-26.76zM434.51 492.69h26.76v8.014h-26.76zM531.17 492.69h26.76v8.014h-26.76zM566.31 492.69h26.76v8.014h-26.76zM267.56 500.30h17.97v8.014h-17.97zM311.49 500.30h17.97v8.014h-17.97zM399.36 500.30h17.97v8.014h-17.97zM443.30 500.30h17.97v8.014h-17.97zM531.17 500.30h17.97v8.014h-17.97zM575.10 500.30h17.97v8.014h-17.97zM249.98 507.92h9.19v8.014h-9.19zM267.56 507.92h9.19v8.014h-9.19zM285.13 507.92h9.19v8.014h-9.19zM302.70 507.92h9.19v8.014h-9.19zM320.28 507.92h9.19v8.014h-9.19zM337.85 507.92h9.19v8.014h-9.19zM381.79 507.92h9.19v8.014h-9.19zM399.36 507.92h9.19v8.014h-9.19zM416.94 507.92h9.19v8.014h-9.19zM434.51 507.92h9.19v8.014h-9.19zM452.08 507.92h9.19v8.014h-9.19zM469.66 507.92h9.19v8.014h-9.19zM513.59 507.92h9.19v8.014h-9.19zM531.17 507.92h9.19v8.014h-9.19zM548.74 507.92h9.19v8.014h-9.19zM566.31 507.92h9.19v8.014h-9.19zM583.89 507.92h9.19v8.014h-9.19zM601.46 507.92h9.19v8.014h-9.19zM293.92 515.53h9.19v8.014h-9.19zM425.72 515.53h9.19v8.014h-9.19zM557.53 515.53h9.19v8.014h-9.19zM267.56 523.15h9.19v8.014h-9.19zM285.13 523.15h26.76v8.014h-26.76zM320.28 523.15h9.19v8.014h-9.19zM399.36 523.15h9.19v8.014h-9.19zM416.94 523.15h26.76v8.014h-26.76zM452.08 523.15h9.19v8.014h-9.19zM531.17 523.15h9.19v8.014h-9.19zM548.74 523.15h26.76v8.014h-26.76zM583.89 523.15h9.19v8.014h-9.19zM267.56 530.76h17.97v8.014h-17.97zM293.92 530.76h9.19v8.014h-9.19zM311.49 530.76h17.97v8.014h-17.97zM399.36 530.76h17.97v8.014h-17.97zM425.72 530.76h9.19v8.014h-9.19zM443.30 530.76h17.97v8.014h-17.97zM531.17 530.76h17.97v8.014h-17.97zM557.53 530.76h9.19v8.014h-9.19zM575.10 530.76h17.97v8.014h-17.97zM276.34 538.37h17.97v8.014h-17.97zM302.70 538.37h17.97v8.014h-17.97zM408.15 538.37h17.97v8.014h-17.97zM434.51 538.37h17.97v8.014h-17.97zM539.95 538.37h17.97v8.014h-17.97zM566.31 538.37h17.97v8.014h-17.97z"/><path fill="#ccc0da" d="M153.33 431.78h9.19v8.014h-9.19zM188.47 431.78h9.19v8.014h-9.19zM662.97 431.78h9.19v8.014h-9.19zM698.12 431.78h9.19v8.014h-9.19zM153.33 439.39h17.97v8.014h-17.97zM179.69 439.39h17.97v8.014h-17.97zM662.97 439.39h17.97v8.014h-17.97zM689.33 439.39h17.97v8.014h-17.97zM162.11 447.01h26.76v8.014h-26.76zM671.76 447.01h26.76v8.014h-26.76zM153.33 523.15h9.19v8.014h-9.19zM188.47 523.15h9.19v8.014h-9.19zM662.97 523.15h9.19v8.014h-9.19zM698.12 523.15h9.19v8.014h-9.19zM153.33 530.76h17.97v8.014h-17.97zM179.69 530.76h17.97v8.014h-17.97zM662.97 530.76h17.97v8.014h-17.97zM689.33 530.76h17.97v8.014h-17.97zM733.27 530.76h9.19v8.014h-9.19zM768.42 530.76h9.19v8.014h-9.19zM162.11 538.37h26.76v8.014h-26.76zM671.76 538.37h26.76v8.014h-26.76zM733.27 538.37h17.97v8.014h-17.97zM759.63 538.37h17.97v8.014h-17.97zM742.05 545.99h26.76v8.014h-26.76z"/><path fill="#c4d79b" d="M197.26 477.46h9.19v8.014h-9.19zM654.18 477.46h9.19v8.014h-9.19zM188.47 485.08h17.97v8.014h-17.97zM654.18 485.08h17.97v8.014h-17.97zM162.11 492.69h26.76v8.014h-26.76zM671.76 492.69h26.76v8.014h-26.76zM47.88 523.15h17.97v8.014h-17.97zM794.78 523.15h17.97v8.014h-17.97zM47.88 530.76h9.19v8.014h-9.19zM803.56 530.76h9.19v8.014h-9.19z"/><rect x="19.5" y="485.3" width="3.1" height="7.6" fill="#217346"/><path d="M286.5 449 L295.5 455 L302.0 455 L309.5 448.5" fill="none" stroke="#c0504d" stroke-width="1.7"/><path d="M245.0 486.5 L250.8 507.8 M264.3 485.8 L258.8 507.8 M333.2 485.8 L337.5 507.8 M353.0 484.5 L347.0 507.8" fill="none" stroke="#000" stroke-width="1.9"/><path d="M418.3 449 L427.3 455 L433.8 455 L441.3 448.5" fill="none" stroke="#c0504d" stroke-width="1.7"/><path d="M376.8 486.5 L382.6 507.8 M396.1 485.8 L390.6 507.8 M465.0 485.8 L469.3 507.8 M484.8 484.5 L478.8 507.8" fill="none" stroke="#000" stroke-width="1.9"/><path d="M550.1 449 L559.1 455 L565.6 455 L573.1 448.5" fill="none" stroke="#c0504d" stroke-width="1.7"/><path d="M508.6 486.5 L514.4 507.8 M527.9 485.8 L522.4 507.8 M596.8 485.8 L601.1 507.8 M616.6 484.5 L610.6 507.8" fill="none" stroke="#000" stroke-width="1.9"/>
<rect x="960.5" y="485" width="11.5" height="9" fill="none" stroke="#217346" stroke-width="2"/>
<rect x="967" y="490" width="7" height="6" fill="#217346" stroke="#fff" stroke-width="1"/>
</svg>

<!-- vertical scroll -->
<div class="box" style="left:1068px;top:220px;width:21px;height:18px;border-color:#ababab"></div>
<svg class="a" style="left:1073px;top:226px" width="12" height="6"><path d="M0 5.5 L5.5 0 L11 5.5Z" fill="#666"/></svg>
<div class="box" style="left:1068px;top:238px;width:21px;height:446px;border-color:#ababab;border-width:2px"></div>
<div class="box" style="left:1068px;top:692px;width:21px;height:19px;border-color:#ababab"></div>
<svg class="a" style="left:1073px;top:699px" width="12" height="6"><path d="M0 0 L5.5 5.5 L11 0Z" fill="#666"/></svg>

<!-- sheet tabs -->
<div class="a" style="left:0;top:710px;width:1094px;height:35px;background:#e6e6e6;border-top:1px solid #a6a6a6"></div>
<svg class="a" style="left:36px;top:720px" width="60" height="14"><path d="M8 2 L3 7 L8 12Z" fill="#c6c6c6"/><path d="M45.5 2 L50.5 7 L45.5 12Z" fill="#c6c6c6"/></svg>
<div class="vsep" style="left:146px;top:715px;height:25px;background:#999"></div>
<div class="rt" style="left:165px;top:718px;font-size:16px;color:#555;letter-spacing:.8px">Sheet1</div>
<div class="a" style="left:241px;top:710px;width:96px;height:31px;background:#fff;border-left:1px solid #a6a6a6;border-right:1px solid #a6a6a6;border-bottom:2px solid #217346"></div>
<div class="rt" style="left:258.5px;top:718px;font-size:16px;font-weight:bold;color:#217346;letter-spacing:.8px">Sheet2</div>
<div class="rt" style="left:355.5px;top:718px;font-size:16px;color:#555;letter-spacing:.8px">Sheet3</div>
<div class="vsep" style="left:430px;top:715px;height:25px;background:#999"></div>
<svg class="a" style="left:478px;top:714px" width="26" height="26"><circle cx="13" cy="13" r="11" fill="none" stroke="#777" stroke-width="1.5"/><path d="M13 7 v12 M7 13 h12" stroke="#666" stroke-width="2"/></svg>
<svg class="a" style="left:656px;top:721px" width="4" height="14"><circle cx="2" cy="2" r="1" fill="#aaa"/><circle cx="2" cy="6.5" r="1" fill="#aaa"/><circle cx="2" cy="11" r="1" fill="#aaa"/></svg>
<div class="box" style="left:682px;top:719px;width:21px;height:18px;border-color:#ababab"></div>
<svg class="a" style="left:688px;top:723px" width="8" height="11"><path d="M7 0 L0 5.5 L7 11Z" fill="#666"/></svg>
<div class="box" style="left:703px;top:719px;width:336px;height:18px;border-color:#ababab;border-width:2px"></div>
<div class="box" style="left:1042px;top:719px;width:21px;height:18px;border-color:#ababab"></div>
<svg class="a" style="left:1049px;top:723px" width="8" height="11"><path d="M0 0 L7 5.5 L0 11Z" fill="#666"/></svg>

<!-- status bar -->
<div class="a" style="left:0;top:745px;width:1094px;height:24px;background:#f0f0f0;border-top:1px solid #d2d2d2"></div>
<div class="rt" style="left:10px;top:750px;font-size:15px;color:#555">Ready</div>
<div class="a" style="left:661px;top:746px;width:54px;height:23px;background:#d4d4d4"></div>
<svg class="a" style="left:675px;top:749px" width="24" height="20"><rect x="1.5" y="1.5" width="19" height="16" fill="none" stroke="#555" stroke-width="1.3"/><path d="M1.5 6.8 h19 M1.5 12.2 h19 M7.8 1.5 v16 M14.2 1.5 v16" stroke="#555" stroke-width="1.2"/></svg>
<svg class="a" style="left:731px;top:749px" width="24" height="20"><rect x="1.5" y="1.5" width="19" height="16" fill="none" stroke="#555" stroke-width="1.3"/><rect x="5.5" y="4.5" width="11" height="10" fill="none" stroke="#555" stroke-width="1.2"/><path d="M8 8 h6 M8 11 h6" stroke="#555" stroke-width="1"/></svg>
<svg class="a" style="left:788px;top:749px" width="24" height="20"><path d="M1.5 17.5 v-16 h19 v16 M1.5 10 h7 v-8.5 M13 1.5 v8.5 h7.5" fill="none" stroke="#555" stroke-width="1.4"/></svg>
<div class="a" style="left:833px;top:757px;width:8px;height:2.5px;background:#555"></div>
<div class="a" style="left:848px;top:758px;width:146px;height:1px;background:#bbb"></div>
<div class="a" style="left:922px;top:754px;width:1px;height:8px;background:#bbb"></div>
<div class="a" style="left:864px;top:751px;width:6px;height:15px;background:#555"></div>
<svg class="a" style="left:1000px;top:751px" width="14" height="14"><path d="M7 1 v12 M1 7 h12" stroke="#444" stroke-width="2.4"/></svg>
<div class="rt" style="left:1035px;top:750px;font-size:15px;color:#555">30%</div>
</body></html>
